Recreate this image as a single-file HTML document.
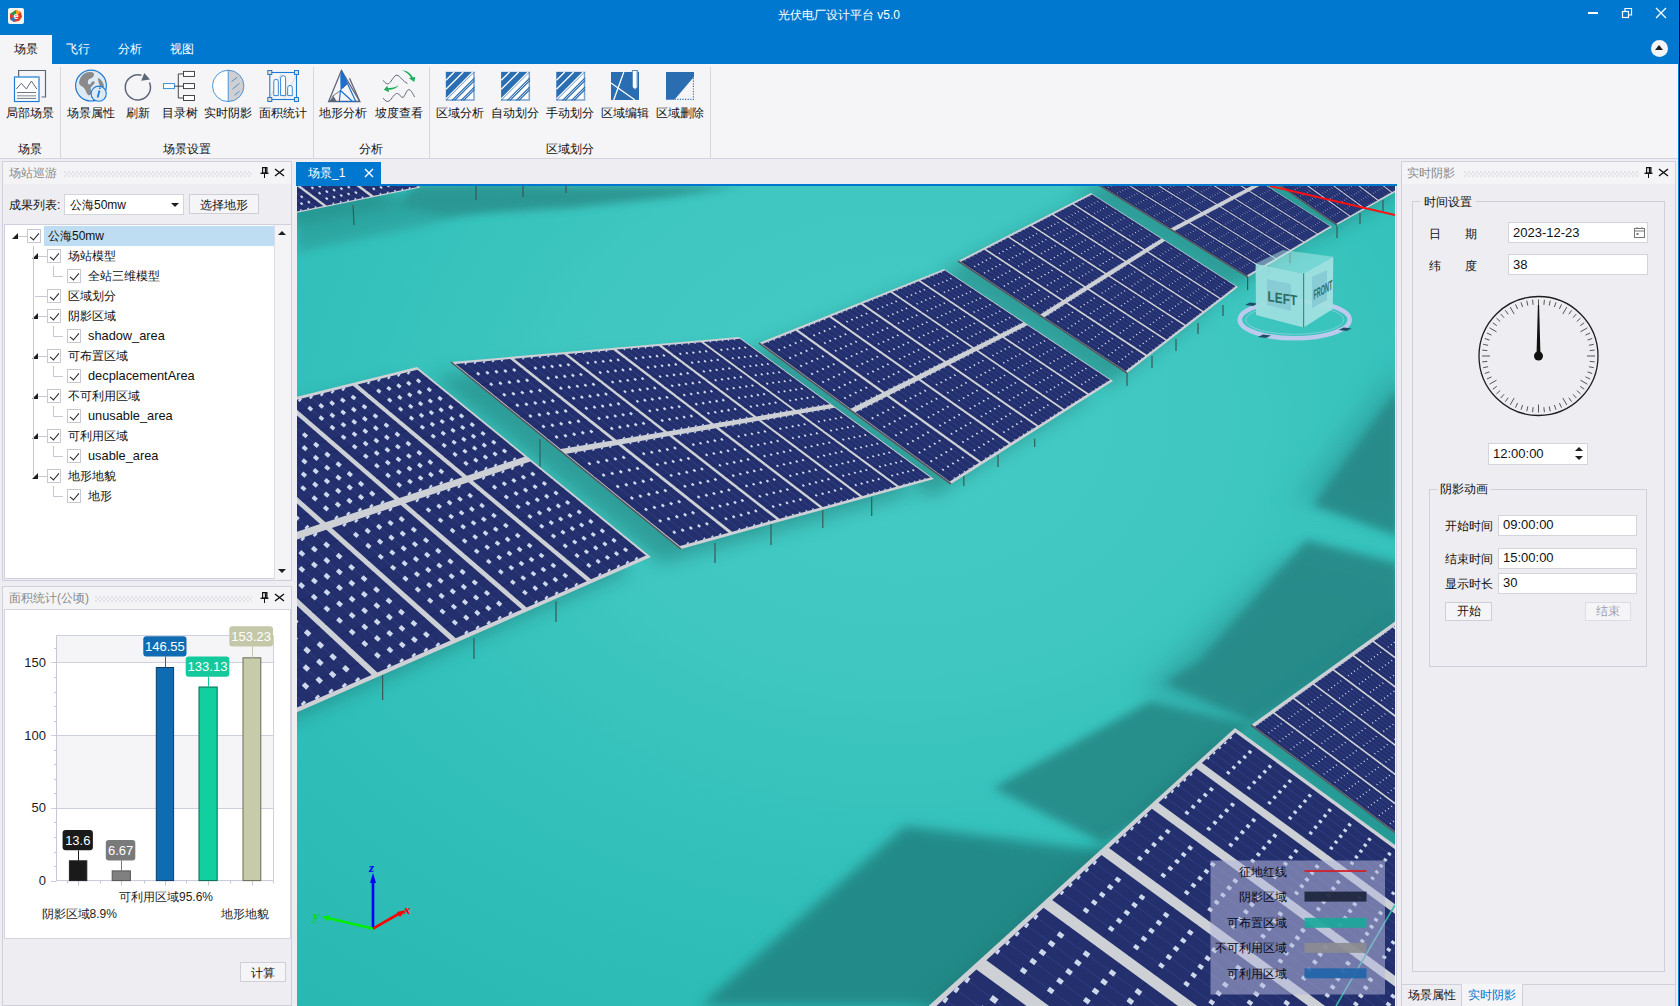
<!DOCTYPE html>
<html><head><meta charset="utf-8">
<style>
*{box-sizing:border-box;margin:0;padding:0}
html,body{width:1680px;height:1006px;overflow:hidden;background:#eeeef2;font-family:"Liberation Sans",sans-serif;font-size:12px;color:#111}
.a{position:absolute}
.t{position:absolute;white-space:nowrap;line-height:14px}
.sep{position:absolute;width:1px;background:#d6d6e0}
.panel{position:absolute;border:1px solid #d0d0dc;background:#ededf2}
.ph{position:absolute;left:0;top:0;right:0;height:22px;background:#f4f4f7}
.dots{position:absolute;height:6px;background-image:radial-gradient(circle at 1px 1px,#dadae2 0.6px,transparent 0.9px),radial-gradient(circle at 1px 1px,#dadae2 0.6px,transparent 0.9px);background-size:4px 4px,4px 4px;background-position:0 0,2px 2px}
.cb{position:absolute;width:14px;height:14px;border:1px solid #c8c8d4;background:#fff}
.cb:after{content:"";position:absolute;left:4px;top:1px;width:4px;height:8px;border:solid #1e1e1e;border-width:0 1.5px 1.5px 0;transform:rotate(40deg)}
.tri{position:absolute;width:0;height:0;border-left:6px solid transparent;border-bottom:6px solid #1e1e1e}
.vl{position:absolute;width:1px;background:#c8c8d4}
.hl{position:absolute;height:1px;background:#c8c8d4}
.inp{position:absolute;background:#fff;border:1px solid #d4d4de}
.btn{position:absolute;background:#f5f5f8;border:1px solid #cfcfda;text-align:center}
.rl{position:absolute;top:42px;font-size:12px;white-space:nowrap;line-height:14px;text-align:center}
.gl{position:absolute;top:78px;font-size:12px;white-space:nowrap;line-height:14px}
</style></head><body>
<!-- title bar -->
<div class="a" style="left:0;top:0;width:1680px;height:64px;background:#0078d0"></div>
<div class="a" style="left:8px;top:8px;width:16px;height:16px;background:#f4f4f0;border-radius:2px"></div>
<svg class="a" style="left:8px;top:8px" width="16" height="16" viewBox="0 0 16 16"><path d="M8 2 L13 4 L14 9 L11 13 L6 14 L2 11 L2 6Z" fill="#e03a2a"/><path d="M2 6 L8 2 L8 8Z" fill="#2a9a3a"/><path d="M8 2 L13 4 L8 8Z" fill="#f5a21b"/><path d="M2 11 L6 14 L8 8Z" fill="#1a7ac8"/><text x="8" y="11" font-size="9" font-family="Liberation Sans" font-weight="bold" fill="#fff" text-anchor="middle">e</text></svg>
<div class="t" style="left:778px;top:8px;color:#fff;font-size:12px">光伏电厂设计平台 v5.0</div>
<div class="a" style="left:1588px;top:12px;width:10px;height:2px;background:#fff"></div>
<svg class="a" style="left:1621px;top:7px" width="12" height="12" viewBox="0 0 12 12"><rect x="1.5" y="4.5" width="6" height="6" fill="none" stroke="#fff" stroke-width="1.2"/><path d="M4 4.5 V1.5 H10.5 V8 H7.5" fill="none" stroke="#fff" stroke-width="1.2"/></svg>
<svg class="a" style="left:1655px;top:7px" width="12" height="12" viewBox="0 0 12 12"><path d="M1 1 L11 11 M11 1 L1 11" stroke="#fff" stroke-width="1.3"/></svg>
<!-- menu tabs -->
<div class="a" style="left:0;top:35px;width:52px;height:29px;background:#f5f5f8"></div>
<div class="t" style="left:14px;top:42px;font-size:12px">场景</div>
<div class="t" style="left:66px;top:42px;color:#fff">飞行</div>
<div class="t" style="left:118px;top:42px;color:#fff">分析</div>
<div class="t" style="left:170px;top:42px;color:#fff">视图</div>
<div class="a" style="left:1651px;top:40px;width:17px;height:17px;border-radius:50%;background:#f5f5f8"></div>
<div class="a" style="left:1655px;top:45px;width:0;height:0;border-left:4.5px solid transparent;border-right:4.5px solid transparent;border-bottom:5px solid #1e1e1e"></div>
<!-- ribbon -->
<div class="a" id="rib" style="left:0;top:64px;width:1678px;height:95px;background:#f5f5f8;border-bottom:1px solid #d4d4de">
  <div class="sep" style="left:60px;top:3px;height:91px"></div>
  <div class="sep" style="left:313px;top:3px;height:91px"></div>
  <div class="sep" style="left:429px;top:3px;height:91px"></div>
  <div class="sep" style="left:710px;top:3px;height:91px"></div>
  <div class="rl" style="left:6px">局部场景</div>
<div class="rl" style="left:67px">场景属性</div>
<div class="rl" style="left:126px">刷新</div>
<div class="rl" style="left:161.5px">目录树</div>
<div class="rl" style="left:204px">实时阴影</div>
<div class="rl" style="left:259px">面积统计</div>
<div class="rl" style="left:319px">地形分析</div>
<div class="rl" style="left:375px">坡度查看</div>
<div class="rl" style="left:436px">区域分析</div>
<div class="rl" style="left:491px">自动划分</div>
<div class="rl" style="left:546px">手动划分</div>
<div class="rl" style="left:601px">区域编辑</div>
<div class="rl" style="left:656px">区域删除</div>
<div class="gl" style="left:18px">场景</div>
<div class="gl" style="left:163px">场景设置</div>
<div class="gl" style="left:359px">分析</div>
<div class="gl" style="left:546px">区域划分</div>
<svg class="a" style="left:0;top:0" width="720" height="60" viewBox="0 64 720 60">
<path d="M18.6 77 V70.5 H45.5 V97 H41.5" fill="none" stroke="#5d6679" stroke-width="1.2"/>
<rect x="14.5" y="77" width="24.5" height="24.5" fill="#fff" stroke="#1f7bd2" stroke-width="1.2"/>
<path d="M14.5 77.3 H39" stroke="#6fb0e6" stroke-width="1.4"/>
<path d="M16.3 89 L21.3 83.3 L26.4 89 L31.4 81 L36.8 89" fill="none" stroke="#5d6679" stroke-width="1"/>
<path d="M17 92.5 H36 M17 98.4 H36" stroke="#5d6679" stroke-width="0.9"/><path d="M17 95.8 H36" stroke="#9aa0ae" stroke-width="1.3"/>
<circle cx="91" cy="85.6" r="15.4" fill="#dde9f3" stroke="#1f7bd2" stroke-width="1.2"/>
<path d="M79 83 C80 76 84 72 90 72 C94 72 95 74 93 77 C91 79 89 78 88 81 C87 84 90 86 91 83 C93 80 96 81 94 84 C92 86 90 87 91 91 C92 94 90 96 88 95 C86 93 86 90 84 88 C82 86 80 86 79 83Z" fill="#8a8a8a"/>
<path d="M98 78 C101 79 104 83 104 87 L101 88 C100 85 98 83 98 78Z" fill="#8a8a8a"/>
<circle cx="98.7" cy="93.7" r="7.6" fill="#dde9f3" stroke="#1f7bd2" stroke-width="1.1"/>
<path d="M99.5 90.5 L97.6 97.5" stroke="#1f7bd2" stroke-width="1.8"/><circle cx="99.8" cy="88.2" r="0.9" fill="#1f7bd2"/>
<path d="M149.5 82.5 A12.6 12.6 0 1 1 141.5 75.3" fill="none" stroke="#5d6679" stroke-width="1.5"/>
<path d="M144.3 73.1 L150 79.6 L141.2 80.8 Z" fill="#5d6679"/>
<rect x="163.5" y="83.6" width="11" height="5" fill="#fff" stroke="#2a86d8" stroke-width="0.9"/>
<rect x="183.5" y="71.4" width="11" height="5" fill="#fff" stroke="#333" stroke-width="0.9"/>
<rect x="183.5" y="83.6" width="11" height="5" fill="#fff" stroke="#333" stroke-width="0.9"/>
<rect x="183.5" y="95.5" width="11" height="5" fill="#fff" stroke="#333" stroke-width="0.9"/>
<path d="M174.5 86.2 H183.5 M178.3 73.9 V98 M178.3 73.9 H183.5 M178.3 98 H183.5" fill="none" stroke="#333" stroke-width="0.9"/>
<path d="M228.2 70.2 A15.7 15.7 0 0 1 228.2 101.6 Z" fill="#d0d0d2"/>
<path d="M228.2 70.2 A15.7 15.7 0 0 0 228.2 101.6 Z" fill="#fff"/>
<circle cx="228.2" cy="85.9" r="15.7" fill="none" stroke="#3a8ad6" stroke-width="0.9"/>
<path d="M228.2 70.2 V101.6" stroke="#3a8ad6" stroke-width="0.9"/>
<path d="M231.5 81.8 L237.5 77 M232.4 89.2 L239.5 83.3 M234.5 95.2 L239.5 91.3" stroke="#3a8ad6" stroke-width="0.9"/>
<path d="M270 98 L281 74 M284 99 L296 76" stroke="#cfcfcf" stroke-width="0.8"/>
<rect x="269.8" y="72.5" width="26.7" height="27" fill="none" stroke="#1f7bd2" stroke-width="1.1"/>
<rect x="267.8" y="70.5" width="4" height="4" fill="#e8dccc" stroke="#1f7bd2" stroke-width="1"/>
<rect x="294.5" y="70.5" width="4" height="4" fill="#e8dccc" stroke="#1f7bd2" stroke-width="1"/>
<rect x="267.8" y="97.5" width="4" height="4" fill="#e8dccc" stroke="#1f7bd2" stroke-width="1"/>
<rect x="294.5" y="97.5" width="4" height="4" fill="#e8dccc" stroke="#1f7bd2" stroke-width="1"/>
<path d="M273.8 95.6 V81.5 A2.2 2.2 0 0 1 278.3 81.5 V95.6 Z" fill="#fff" stroke="#1f7bd2" stroke-width="0.9"/>
<path d="M280.6 95.6 V78.1 A2.5 2.5 0 0 1 285.6 78.1 V95.6 Z" fill="#fff" stroke="#1f7bd2" stroke-width="0.9"/>
<path d="M287.7 95.6 V87.7 A2.3 2.3 0 0 1 292.3 87.7 V95.6 Z" fill="#fff" stroke="#1f7bd2" stroke-width="0.9"/>
<path d="M341.4 70.5 L328.6 101.5 H359.8 Z" fill="none" stroke="#5d6679" stroke-width="1.3"/>
<path d="M349.5 78.2 L359.8 101.5" stroke="#5d6679" stroke-width="1.3"/>
<path d="M341.4 70.5 L347.8 83.5 L340.5 90.5 L340.3 76 Z" fill="#1a6fcc"/>
<path d="M341.4 70.5 L355.8 101.5 M340.5 90 L339.3 101.5 M340.5 90.5 L352.5 101.5 M339 101.5 H356" fill="none" stroke="#1a6fcc" stroke-width="1.2"/>
<path d="M348 83 L343 88 M340.5 90.5 L331.5 97" stroke="#5d6679" stroke-width="0.9"/>
<path d="M329 101.5 L333.5 96 L336.7 101.5 Z" fill="#5d6679"/>
<path d="M383.1 80.3 C385 83 387 84.5 389 83.5 C392 81 394 75 397 75.2 C400 75.5 403 82 407.5 83.3" fill="none" stroke="#5d6679" stroke-width="1"/>
<path d="M383.1 98.1 C385 101 387 102 389 101.2 C392 99 394.5 93 397.5 93.5 C400 94 401 98 403 97.5 C405 96.5 406.5 89.5 409 89.6 C411 89.8 413 94 414.6 97" fill="none" stroke="#5d6679" stroke-width="1"/>
<path d="M402.1 70.3 C407 70.5 411 73.5 413 77.5 L415.3 76.8 L414.2 82 L408.7 78 L411 77.8 C409.5 74.6 406 72 402.1 70.3Z" fill="#1fae5a"/>
<path d="M398.8 85.3 C396.5 88.5 392 90.3 388.5 89.5 L389.2 92.3 L383.8 89.8 L387.3 85.7 L388 88 C392 88.3 396 87 398.8 85.3Z" fill="#1fae5a"/>
<g transform="translate(446.0,72.0)"><rect x="0.5" y="0.5" width="27.5" height="27.5" fill="#fff" stroke="#7aa3d3" stroke-width="1.5"/><path d="M0 0 H28.5 L0 28.5 Z" fill="#2a6db0"/><path d="M0 8.3 L8.3 0" stroke="#fff" stroke-width="1.3"/><path d="M0 17.3 L17.3 0" stroke="#fff" stroke-width="1.3"/><path d="M0 26.9 L26.9 0" stroke="#fff" stroke-width="1.3"/><path d="M6.0 28.5 L28.5 6.0" stroke="#2a6db0" stroke-width="1.1"/><path d="M8.5 28.5 L28.5 8.5" stroke="#2a6db0" stroke-width="1.1"/><path d="M15.0 28.5 L28.5 15.0" stroke="#2a6db0" stroke-width="1.1"/><path d="M17.5 28.5 L28.5 17.5" stroke="#2a6db0" stroke-width="1.1"/></g>
<g transform="translate(501.3,72.0)"><rect x="0.5" y="0.5" width="27.5" height="27.5" fill="#fff" stroke="#7aa3d3" stroke-width="1.5"/><path d="M0 0 H28.5 L0 28.5 Z" fill="#2a6db0"/><path d="M0 8.3 L8.3 0" stroke="#fff" stroke-width="1.3"/><path d="M0 17.3 L17.3 0" stroke="#fff" stroke-width="1.3"/><path d="M0 26.9 L26.9 0" stroke="#fff" stroke-width="1.3"/><path d="M6.0 28.5 L28.5 6.0" stroke="#2a6db0" stroke-width="1.1"/><path d="M8.5 28.5 L28.5 8.5" stroke="#2a6db0" stroke-width="1.1"/><path d="M15.0 28.5 L28.5 15.0" stroke="#2a6db0" stroke-width="1.1"/><path d="M17.5 28.5 L28.5 17.5" stroke="#2a6db0" stroke-width="1.1"/></g>
<g transform="translate(556.5,72.0)"><rect x="0.5" y="0.5" width="27.5" height="27.5" fill="#fff" stroke="#7aa3d3" stroke-width="1.5"/><path d="M0 0 H28.5 L0 28.5 Z" fill="#2a6db0"/><path d="M0 8.3 L8.3 0" stroke="#fff" stroke-width="1.3"/><path d="M0 17.3 L17.3 0" stroke="#fff" stroke-width="1.3"/><path d="M0 26.9 L26.9 0" stroke="#fff" stroke-width="1.3"/><path d="M6.0 28.5 L28.5 6.0" stroke="#2a6db0" stroke-width="1.1"/><path d="M8.5 28.5 L28.5 8.5" stroke="#2a6db0" stroke-width="1.1"/><path d="M15.0 28.5 L28.5 15.0" stroke="#2a6db0" stroke-width="1.1"/><path d="M17.5 28.5 L28.5 17.5" stroke="#2a6db0" stroke-width="1.1"/></g>
<rect x="611" y="72" width="28" height="28" fill="#2a6db0"/>
<path d="M623.8 72 L613.7 100 M611 83 L635 100" stroke="#fff" stroke-width="1.3"/>
<path d="M632.3 70.5 H637.7 V87 L635 89.5 L632.3 87 Z" fill="#fff" stroke="#2a6db0" stroke-width="0.8"/>
<path d="M636.8 71 V86.5" stroke="#8ab0da" stroke-width="0.9"/>
<path d="M666 72 H694 V76.7 L674.4 99.8 H666 Z" fill="#2a6db0"/>
<path d="M693.4 78 V99.4 H675" fill="none" stroke="#2a6db0" stroke-width="1.1" stroke-dasharray="1.2 1.4"/>
</svg>
</div>
<div class="a" style="left:1678px;top:0;width:1px;height:1006px;background:#0080dc"></div><div class="a" style="left:1679px;top:0;width:1px;height:1006px;background:#000"></div>

<!-- left panel 1 -->
<div class="panel" style="left:2px;top:161px;width:290px;height:420px">
  <div class="ph"></div>
  <div class="t" style="left:6px;top:4px;color:#8a8a8a">场站巡游</div>
  <div class="dots" style="left:61px;top:9px;width:188px"></div>
  <svg class="a" style="left:257px;top:5px" width="10" height="12" viewBox="0 0 10 12"><path d="M2.6 0.6 H6.9 V6 H2.6Z" fill="#fff" stroke="#111" stroke-width="1.2"/><path d="M5.6 1 V6" stroke="#111" stroke-width="1.6"/><path d="M0.5 6.3 H8.5" stroke="#111" stroke-width="1.3"/><path d="M4.5 6.5 V11" stroke="#111" stroke-width="1"/></svg>
  <svg class="a" style="left:271px;top:5px" width="11" height="11" viewBox="0 0 11 11"><path d="M1 2 L10 9 M10 2 L1 9" stroke="#111" stroke-width="1.4"/></svg>
  <div class="t" style="left:6px;top:36px">成果列表:</div>
  <div class="inp" style="left:61px;top:32px;width:120px;height:21px"></div>
  <div class="t" style="left:67px;top:36px">公海50mw</div>
  <div class="a" style="left:168px;top:41px;width:0;height:0;border-left:4px solid transparent;border-right:4px solid transparent;border-top:4px solid #1e1e1e"></div>
  <div class="btn" style="left:186px;top:32px;width:70px;height:20px"></div>
  <div class="t" style="left:197px;top:36px">选择地形</div>
  <div class="a" style="left:1px;top:62px;width:287px;height:355px;background:#fff;border:1px solid #d0d0dc;border-right:none"></div>
  <div class="a" style="left:271px;top:63px;width:17px;height:354px;background:#f4f4f7;border-left:1px solid #dcdce4"></div>
  <div class="a" style="left:275px;top:69px;width:0;height:0;border-left:4px solid transparent;border-right:4px solid transparent;border-bottom:4px solid #1e1e1e"></div>
  <div class="a" style="left:275px;top:407px;width:0;height:0;border-left:4px solid transparent;border-right:4px solid transparent;border-top:4px solid #1e1e1e"></div>
  <div class="a" style="left:41px;top:64px;width:230px;height:20px;background:#bedcf2"></div>
<div class="cb" style="left:24px;top:67px"></div>
<div class="t" style="left:45px;top:67px">公海50mw</div>
<div class="tri" style="left:9px;top:71px"></div>
<div class="hl" style="left:15px;top:74px;width:9px"></div>
<div class="cb" style="left:44px;top:87px"></div>
<div class="t" style="left:65px;top:87px">场站模型</div>
<div class="tri" style="left:29px;top:91px"></div>
<div class="hl" style="left:35px;top:94px;width:9px"></div>
<div class="cb" style="left:64px;top:107px"></div>
<div class="t" style="left:85px;top:107px">全站三维模型</div>
<div class="vl" style="left:50px;top:104px;height:11px"></div>
<div class="hl" style="left:50px;top:114px;width:10px"></div>
<div class="cb" style="left:44px;top:127px"></div>
<div class="t" style="left:65px;top:127px">区域划分</div>
<div class="hl" style="left:32px;top:134px;width:12px"></div>
<div class="cb" style="left:44px;top:147px"></div>
<div class="t" style="left:65px;top:147px">阴影区域</div>
<div class="tri" style="left:29px;top:151px"></div>
<div class="hl" style="left:35px;top:154px;width:9px"></div>
<div class="cb" style="left:64px;top:167px"></div>
<div class="t" style="left:85px;top:167px;font-size:12.8px">shadow_area</div>
<div class="vl" style="left:50px;top:164px;height:11px"></div>
<div class="hl" style="left:50px;top:174px;width:10px"></div>
<div class="cb" style="left:44px;top:187px"></div>
<div class="t" style="left:65px;top:187px">可布置区域</div>
<div class="tri" style="left:29px;top:191px"></div>
<div class="hl" style="left:35px;top:194px;width:9px"></div>
<div class="cb" style="left:64px;top:207px"></div>
<div class="t" style="left:85px;top:207px;font-size:12.8px">decplacementArea</div>
<div class="vl" style="left:50px;top:204px;height:11px"></div>
<div class="hl" style="left:50px;top:214px;width:10px"></div>
<div class="cb" style="left:44px;top:227px"></div>
<div class="t" style="left:65px;top:227px">不可利用区域</div>
<div class="tri" style="left:29px;top:231px"></div>
<div class="hl" style="left:35px;top:234px;width:9px"></div>
<div class="cb" style="left:64px;top:247px"></div>
<div class="t" style="left:85px;top:247px;font-size:12.8px">unusable_area</div>
<div class="vl" style="left:50px;top:244px;height:11px"></div>
<div class="hl" style="left:50px;top:254px;width:10px"></div>
<div class="cb" style="left:44px;top:267px"></div>
<div class="t" style="left:65px;top:267px">可利用区域</div>
<div class="tri" style="left:29px;top:271px"></div>
<div class="hl" style="left:35px;top:274px;width:9px"></div>
<div class="cb" style="left:64px;top:287px"></div>
<div class="t" style="left:85px;top:287px;font-size:12.8px">usable_area</div>
<div class="vl" style="left:50px;top:284px;height:11px"></div>
<div class="hl" style="left:50px;top:294px;width:10px"></div>
<div class="cb" style="left:44px;top:307px"></div>
<div class="t" style="left:65px;top:307px">地形地貌</div>
<div class="tri" style="left:29px;top:311px"></div>
<div class="hl" style="left:35px;top:314px;width:9px"></div>
<div class="cb" style="left:64px;top:327px"></div>
<div class="t" style="left:85px;top:327px">地形</div>
<div class="vl" style="left:50px;top:324px;height:11px"></div>
<div class="hl" style="left:50px;top:334px;width:10px"></div>
<div class="vl" style="left:30px;top:84px;height:230px"></div>
</div>

<!-- left panel 2 -->
<div class="panel" style="left:2px;top:586px;width:290px;height:420px">
  <div class="ph"></div>
  <div class="t" style="left:6px;top:4px;color:#8a8a8a">面积统计(公顷)</div>
  <div class="dots" style="left:92px;top:9px;width:157px"></div>
  <svg class="a" style="left:257px;top:5px" width="10" height="12" viewBox="0 0 10 12"><path d="M2.6 0.6 H6.9 V6 H2.6Z" fill="#fff" stroke="#111" stroke-width="1.2"/><path d="M5.6 1 V6" stroke="#111" stroke-width="1.6"/><path d="M0.5 6.3 H8.5" stroke="#111" stroke-width="1.3"/><path d="M4.5 6.5 V11" stroke="#111" stroke-width="1"/></svg>
  <svg class="a" style="left:271px;top:5px" width="11" height="11" viewBox="0 0 11 11"><path d="M1 2 L10 9 M10 2 L1 9" stroke="#111" stroke-width="1.4"/></svg>
  <div class="a" style="left:1px;top:22px;width:287px;height:330px;background:#fff;border:1px solid #d4d4de"></div>
  <div class="btn" style="left:237px;top:375px;width:46px;height:20px"></div>
  <div class="t" style="left:248px;top:379px">计算</div>
</div>

<!-- center doc tab -->
<div class="a" style="left:296px;top:162px;width:85px;height:23px;background:#0078d0"></div>
<div class="t" style="left:308px;top:166px;color:#fff">场景_1</div>
<svg class="a" style="left:364px;top:168px" width="10" height="10" viewBox="0 0 10 10"><path d="M1 1 L9 9 M9 1 L1 9" stroke="#fff" stroke-width="1.4"/></svg>
<div class="a" style="left:296px;top:184px;width:1101px;height:2px;background:#0078d0"></div>
<div class="a" style="left:1396px;top:186px;width:1px;height:820px;background:#cfd0dc"></div>
<div class="a" style="left:1395px;top:186px;width:1px;height:820px;background:#f4f4f8"></div>
<div class="a" style="left:297px;top:186px;width:1098px;height:820px;overflow:hidden">
<svg width="1098" height="820" viewBox="0 0 1098 820" style="display:block">
<defs><filter id="b4" x="-30%" y="-30%" width="160%" height="160%"><feGaussianBlur stdDeviation="4"/></filter><filter id="b5" x="-30%" y="-30%" width="160%" height="160%"><feGaussianBlur stdDeviation="5"/></filter><filter id="b6" x="-30%" y="-30%" width="160%" height="160%"><feGaussianBlur stdDeviation="6"/></filter><filter id="b7" x="-30%" y="-30%" width="160%" height="160%"><feGaussianBlur stdDeviation="7"/></filter><filter id="b8" x="-30%" y="-30%" width="160%" height="160%"><feGaussianBlur stdDeviation="8"/></filter><filter id="b9" x="-30%" y="-30%" width="160%" height="160%"><feGaussianBlur stdDeviation="9"/></filter><filter id="b10" x="-30%" y="-30%" width="160%" height="160%"><feGaussianBlur stdDeviation="10"/></filter><filter id="b12" x="-30%" y="-30%" width="160%" height="160%"><feGaussianBlur stdDeviation="12"/></filter><radialGradient id="gnd" gradientUnits="userSpaceOnUse" cx="603" cy="234" r="800" gradientTransform="translate(603,234) scale(1.3,1) translate(-603,-234)"><stop offset="0" stop-color="#46cbc5"/><stop offset="0.3" stop-color="#40c7c1"/><stop offset="0.55" stop-color="#34c1bb"/><stop offset="0.75" stop-color="#2dbcb6"/><stop offset="1" stop-color="#28b6b0"/></radialGradient></defs>
<style>.fr{fill:#cdd1d6}.nv{fill:#24306e}.gr{stroke:#364992;stroke-width:0.6;fill:none}.gp{stroke:#18225e;stroke-width:0.6;fill:none}.dt path{stroke:#cdd8ea;fill:none}.ed{stroke:#55585e;stroke-width:1.6;fill:none}.lg{stroke:#3d5652;stroke-width:1.2;fill:none}</style>
<rect width="1098" height="820" fill="url(#gnd)"/>
<path d="M118.0,0.0 L443.0,0.0 L373.0,11.0 L273.0,22.0 L148.0,29.0 L103.0,21.0 Z" fill="#2a8f8b" opacity="0.85" filter="url(#b4)"/>
<path d="M0.0,29.0 L124.0,3.0 L173.0,0.0 L263.0,0.0 L133.0,38.0 L0.0,66.0 Z" fill="#2b9995" opacity="0.60" filter="url(#b5)"/>
<path d="M993.0,319.0 L1103.0,174.0 L1103.0,329.0 L1023.0,314.0 Z" fill="#2c9896" opacity="0.55" filter="url(#b12)"/>
<path d="M1016.0,319.0 L1103.0,199.0 L1103.0,351.0 Z" fill="#288887" opacity="0.90" filter="url(#b5)"/>
<path d="M1003.0,370.0 L1103.0,394.0 L1103.0,454.0 L956.0,544.0 L843.0,504.0 L883.0,469.0 L983.0,374.0 Z" fill="#2c9896" opacity="0.60" filter="url(#b12)"/>
<path d="M1009.0,354.0 L1103.0,378.0 L1103.0,439.0 L956.0,536.0 L868.0,497.0 L903.0,474.0 Z" fill="#288887" opacity="0.90" filter="url(#b5)"/>
<path d="M696.0,602.0 L853.0,515.0 L953.0,538.0 L883.0,606.0 L806.0,657.0 Z" fill="#288f8c" opacity="1.00" filter="url(#b5)"/>
<path d="M403.0,820.0 L608.0,640.0 L814.0,666.0 L658.0,820.0 Z" fill="#238b89" opacity="1.00" filter="url(#b6)"/>
<path class="lg" d="M85.6,489.0 L85.6,514.0M176.9,452.0 L177.0,473.0M259.0,415.0 L259.0,436.0M243.0,253.0 L243.0,281.0M418.0,357.0 L418.0,377.0M474.0,338.0 L474.0,359.0M525.8,322.0 L525.8,342.0M574.7,311.0 L574.7,330.0M666.8,289.0 L666.8,300.0M701.0,269.0 L701.0,281.0M737.7,252.7 L737.7,261.0M830.0,187.0 L830.0,200.0M855.0,170.0 L855.0,182.0M879.0,153.0 L879.0,165.0M901.0,137.0 L901.0,148.0M926.0,119.0 L926.0,130.0M950.6,91.0 L950.6,104.0M971.0,79.0 L971.0,90.0M993.0,67.0 L993.0,77.0M1040.0,40.0 L1040.0,52.0M1063.0,27.0 L1063.0,38.0M1086.0,14.0 L1086.0,25.0M179.0,0.0 L179.0,14.0M226.0,0.0 L226.0,11.0M269.0,0.0 L269.0,7.0M56.0,19.0 L57.0,39.0"/>
<path d="M-205.0,-36.0 L-17.0,-74.0 L103.5,15.6 L-85.0,54.0 Z" fill="#1d7572" opacity="0.5" filter="url(#b9)"/>
<path d="M-389.0,316.0 L100.0,195.0 L334.0,385.0 L-124.0,586.0 Z" fill="#1d7572" opacity="0.5" filter="url(#b9)"/>
<path d="M134.0,190.0 L422.0,165.0 L617.0,307.0 L364.0,377.0 Z" fill="#1d7572" opacity="0.5" filter="url(#b9)"/>
<path d="M442.0,171.0 L627.0,97.0 L796.0,209.0 L634.0,312.0 Z" fill="#1d7572" opacity="0.5" filter="url(#b9)"/>
<path d="M641.0,89.0 L774.0,21.0 L921.0,115.0 L810.0,201.0 Z" fill="#1d7572" opacity="0.5" filter="url(#b9)"/>
<path d="M777.0,10.0 L873.0,-35.0 L1015.0,55.0 L931.0,105.0 Z" fill="#1d7572" opacity="0.5" filter="url(#b9)"/>
<path d="M883.0,-42.0 L983.0,-92.0 L1103.0,6.0 L1020.0,53.0 Z" fill="#1d7572" opacity="0.5" filter="url(#b9)"/>
<path d="M918.0,556.0 L488.5,945.7 L892.4,1240.4 L1160.0,733.0 Z" fill="#1d7572" opacity="0.5" filter="url(#b9)"/>
<path d="M934.0,553.0 L1133.0,410.0 L1382.0,596.0 L1183.0,739.0 Z" fill="#1d7572" opacity="0.5" filter="url(#b9)"/>
<path class="fr" d="M-185.0,-50.0 L3.0,-88.0 L123.5,1.6 L-65.0,40.0 Z"/>
<path class="nv" d="M-181.9,-49.3 L-138.1,-58.1 L-81.1,-15.5 L-125.0,-6.6 ZM-134.8,-58.8 L-91.1,-67.6 L-34.0,-25.0 L-77.8,-16.1 ZM-87.8,-68.3 L-44.1,-77.1 L13.0,-34.6 L-30.7,-25.7 ZM-40.8,-77.8 L2.8,-86.6 L60.0,-44.1 L16.3,-35.2 ZM-122.0,-4.3 L-78.1,-13.2 L-20.9,29.6 L-64.8,38.6 ZM-74.8,-13.9 L-31.0,-22.8 L26.3,20.0 L-17.6,29.0 ZM-27.7,-23.4 L16.0,-32.3 L73.4,10.4 L29.6,19.4 ZM19.3,-33.0 L63.0,-41.8 L120.4,0.9 L76.7,9.8 Z"/>
<path class="gp" d="M-174.8,-43.9 L-131.0,-52.8M-167.7,-38.6 L-123.9,-47.5M-160.6,-33.3 L-116.8,-42.1M-153.5,-27.9 L-109.7,-36.8M-146.4,-22.6 L-102.5,-31.5M-139.2,-17.2 L-95.4,-26.1M-132.1,-11.9 L-88.3,-20.8M-127.7,-53.5 L-84.0,-62.3M-120.6,-48.1 L-76.8,-57.0M-113.5,-42.8 L-69.7,-51.7M-106.4,-37.5 L-62.6,-46.3M-99.2,-32.1 L-55.5,-41.0M-92.1,-26.8 L-48.3,-35.7M-85.0,-21.5 L-41.2,-30.3M-80.7,-63.0 L-37.0,-71.8M-73.6,-57.6 L-29.9,-66.5M-66.4,-52.3 L-22.7,-61.2M-59.3,-47.0 L-15.6,-55.9M-52.2,-41.7 L-8.4,-50.5M-45.0,-36.3 L-1.3,-45.2M-37.9,-31.0 L5.8,-39.9M-33.7,-72.5 L9.9,-81.3M-26.6,-67.2 L17.1,-76.0M-19.4,-61.8 L24.2,-70.7M-12.3,-56.5 L31.4,-65.4M-5.2,-51.2 L38.5,-60.0M2.0,-45.9 L45.7,-54.7M9.1,-40.5 L52.8,-49.4M-114.8,1.0 L-71.0,-7.9M-107.7,6.4 L-63.8,-2.5M-100.6,11.8 L-56.7,2.8M-93.4,17.1 L-49.5,8.2M-86.3,22.5 L-42.4,13.5M-79.1,27.8 L-35.2,18.9M-72.0,33.2 L-28.0,24.3M-67.7,-8.5 L-23.9,-17.4M-60.5,-3.2 L-16.7,-12.1M-53.4,2.2 L-9.6,-6.7M-46.2,7.5 L-2.4,-1.4M-39.1,12.9 L4.8,4.0M-31.9,18.2 L11.9,9.3M-24.7,23.6 L19.1,14.7M-20.6,-18.1 L23.2,-27.0M-13.4,-12.8 L30.3,-21.6M-6.3,-7.4 L37.5,-16.3M0.9,-2.1 L44.7,-11.0M8.1,3.3 L51.8,-5.6M15.2,8.6 L59.0,-0.3M22.4,14.0 L66.2,5.1M26.5,-27.6 L70.1,-36.5M33.6,-22.3 L77.3,-31.2M40.8,-17.0 L84.5,-25.9M48.0,-11.6 L91.7,-20.5M55.1,-6.3 L98.8,-15.2M62.3,-0.9 L106.0,-9.8M69.5,4.4 L113.2,-4.5"/>
<path class="gr" d="M-174.6,-50.7 L-117.7,-8.0M-167.3,-52.2 L-110.4,-9.5M-160.0,-53.7 L-103.0,-11.0M-152.7,-55.2 L-95.7,-12.5M-145.4,-56.6 L-88.4,-14.0M-127.5,-60.3 L-70.5,-17.6M-120.2,-61.7 L-63.2,-19.1M-112.9,-63.2 L-55.9,-20.6M-105.7,-64.7 L-48.6,-22.0M-98.4,-66.1 L-41.3,-23.5M-80.5,-69.8 L-23.4,-27.2M-73.2,-71.2 L-16.2,-28.6M-65.9,-72.7 L-8.9,-30.1M-58.7,-74.2 L-1.6,-31.6M-51.4,-75.6 L5.7,-33.1M-33.6,-79.2 L23.6,-36.7M-26.3,-80.7 L30.9,-38.2M-19.0,-82.2 L38.1,-39.7M-11.7,-83.7 L45.4,-41.1M-4.5,-85.1 L52.7,-42.6M-114.7,-5.8 L-57.5,37.1M-107.4,-7.3 L-50.1,35.6M-100.0,-8.8 L-42.8,34.1M-92.7,-10.2 L-35.5,32.6M-85.4,-11.7 L-28.2,31.1M-67.5,-15.4 L-10.3,27.5M-60.2,-16.8 L-3.0,26.0M-52.9,-18.3 L4.4,24.5M-45.6,-19.8 L11.7,23.0M-38.3,-21.3 L19.0,21.5M-20.4,-24.9 L36.9,17.9M-13.1,-26.4 L44.2,16.4M-5.9,-27.9 L51.5,14.9M1.4,-29.4 L58.8,13.4M8.7,-30.8 L66.1,11.9M26.6,-34.5 L84.0,8.3M33.9,-35.9 L91.2,6.8M41.1,-37.4 L98.5,5.3M48.4,-38.9 L105.8,3.8M55.7,-40.4 L113.1,2.3"/>
<g class="dt"><path style="stroke-width:2.09" d="M-174.6,-50.7 L-117.7,-8.0" stroke-dasharray="2.61 6.29" stroke-dashoffset="-7.59"/><path style="stroke-width:2.09" d="M-167.3,-52.2 L-110.4,-9.5" stroke-dasharray="2.61 6.29" stroke-dashoffset="-7.59"/><path style="stroke-width:2.09" d="M-160.0,-53.7 L-103.0,-11.0" stroke-dasharray="2.61 6.29" stroke-dashoffset="-7.59"/><path style="stroke-width:2.09" d="M-152.7,-55.2 L-95.7,-12.5" stroke-dasharray="2.61 6.29" stroke-dashoffset="-7.59"/><path style="stroke-width:2.09" d="M-145.4,-56.6 L-88.4,-14.0" stroke-dasharray="2.61 6.29" stroke-dashoffset="-7.59"/><path style="stroke-width:2.08" d="M-127.5,-60.3 L-70.5,-17.6" stroke-dasharray="2.60 6.30" stroke-dashoffset="-7.60"/><path style="stroke-width:2.08" d="M-120.2,-61.7 L-63.2,-19.1" stroke-dasharray="2.60 6.30" stroke-dashoffset="-7.60"/><path style="stroke-width:2.08" d="M-112.9,-63.2 L-55.9,-20.6" stroke-dasharray="2.60 6.30" stroke-dashoffset="-7.60"/><path style="stroke-width:2.08" d="M-105.7,-64.7 L-48.6,-22.0" stroke-dasharray="2.60 6.30" stroke-dashoffset="-7.60"/><path style="stroke-width:2.08" d="M-98.4,-66.1 L-41.3,-23.5" stroke-dasharray="2.60 6.30" stroke-dashoffset="-7.60"/><path style="stroke-width:2.08" d="M-80.5,-69.8 L-23.4,-27.2" stroke-dasharray="2.60 6.30" stroke-dashoffset="-7.60"/><path style="stroke-width:2.08" d="M-73.2,-71.2 L-16.2,-28.6" stroke-dasharray="2.60 6.30" stroke-dashoffset="-7.60"/><path style="stroke-width:2.08" d="M-65.9,-72.7 L-8.9,-30.1" stroke-dasharray="2.60 6.30" stroke-dashoffset="-7.60"/><path style="stroke-width:2.08" d="M-58.7,-74.2 L-1.6,-31.6" stroke-dasharray="2.60 6.30" stroke-dashoffset="-7.60"/><path style="stroke-width:2.08" d="M-51.4,-75.6 L5.7,-33.1" stroke-dasharray="2.60 6.30" stroke-dashoffset="-7.60"/><path style="stroke-width:2.08" d="M-33.6,-79.2 L23.6,-36.7" stroke-dasharray="2.60 6.31" stroke-dashoffset="-7.61"/><path style="stroke-width:2.08" d="M-26.3,-80.7 L30.9,-38.2" stroke-dasharray="2.60 6.31" stroke-dashoffset="-7.61"/><path style="stroke-width:2.08" d="M-19.0,-82.2 L38.1,-39.7" stroke-dasharray="2.60 6.31" stroke-dashoffset="-7.61"/><path style="stroke-width:2.08" d="M-11.7,-83.7 L45.4,-41.1" stroke-dasharray="2.60 6.31" stroke-dashoffset="-7.61"/><path style="stroke-width:2.08" d="M-4.5,-85.1 L52.7,-42.6" stroke-dasharray="2.60 6.31" stroke-dashoffset="-7.61"/><path style="stroke-width:2.09" d="M-114.7,-5.8 L-57.5,37.1" stroke-dasharray="2.61 6.33" stroke-dashoffset="-7.63"/><path style="stroke-width:2.09" d="M-107.4,-7.3 L-50.1,35.6" stroke-dasharray="2.61 6.33" stroke-dashoffset="-7.63"/><path style="stroke-width:2.09" d="M-100.0,-8.8 L-42.8,34.1" stroke-dasharray="2.61 6.33" stroke-dashoffset="-7.63"/><path style="stroke-width:2.09" d="M-92.7,-10.2 L-35.5,32.6" stroke-dasharray="2.61 6.33" stroke-dashoffset="-7.63"/><path style="stroke-width:2.09" d="M-85.4,-11.7 L-28.2,31.1" stroke-dasharray="2.61 6.33" stroke-dashoffset="-7.63"/><path style="stroke-width:2.09" d="M-67.5,-15.4 L-10.3,27.5" stroke-dasharray="2.61 6.33" stroke-dashoffset="-7.63"/><path style="stroke-width:2.09" d="M-60.2,-16.8 L-3.0,26.0" stroke-dasharray="2.61 6.33" stroke-dashoffset="-7.63"/><path style="stroke-width:2.09" d="M-52.9,-18.3 L4.4,24.5" stroke-dasharray="2.61 6.33" stroke-dashoffset="-7.64"/><path style="stroke-width:2.09" d="M-45.6,-19.8 L11.7,23.0" stroke-dasharray="2.61 6.33" stroke-dashoffset="-7.64"/><path style="stroke-width:2.09" d="M-38.3,-21.3 L19.0,21.5" stroke-dasharray="2.61 6.33" stroke-dashoffset="-7.64"/><path style="stroke-width:2.08" d="M-20.4,-24.9 L36.9,17.9" stroke-dasharray="2.60 6.34" stroke-dashoffset="-7.64"/><path style="stroke-width:2.08" d="M-13.1,-26.4 L44.2,16.4" stroke-dasharray="2.60 6.34" stroke-dashoffset="-7.64"/><path style="stroke-width:2.08" d="M-5.9,-27.9 L51.5,14.9" stroke-dasharray="2.60 6.34" stroke-dashoffset="-7.64"/><path style="stroke-width:2.08" d="M1.4,-29.4 L58.8,13.4" stroke-dasharray="2.60 6.34" stroke-dashoffset="-7.64"/><path style="stroke-width:2.08" d="M8.7,-30.8 L66.1,11.9" stroke-dasharray="2.60 6.34" stroke-dashoffset="-7.64"/><path style="stroke-width:2.08" d="M26.6,-34.5 L84.0,8.3" stroke-dasharray="2.60 6.34" stroke-dashoffset="-7.64"/><path style="stroke-width:2.08" d="M33.9,-35.9 L91.2,6.8" stroke-dasharray="2.60 6.34" stroke-dashoffset="-7.64"/><path style="stroke-width:2.08" d="M41.1,-37.4 L98.5,5.3" stroke-dasharray="2.60 6.34" stroke-dashoffset="-7.64"/><path style="stroke-width:2.08" d="M48.4,-38.9 L105.8,3.8" stroke-dasharray="2.60 6.34" stroke-dashoffset="-7.64"/><path style="stroke-width:2.08" d="M55.7,-40.4 L113.1,2.3" stroke-dasharray="2.60 6.34" stroke-dashoffset="-7.64"/></g>
<path class="fr" d="M-369.0,302.0 L120.0,181.0 L354.0,371.0 L-104.0,572.0 Z"/>
<path class="nv" d="M-362.4,304.0 L-267.4,280.3 L-149.4,394.9 L-242.8,425.6 ZM-260.6,278.6 L-174.9,257.3 L-58.8,365.1 L-142.8,392.7 ZM-168.7,255.7 L-90.8,236.3 L23.1,338.1 L-52.8,363.1 ZM-85.2,234.9 L-14.2,217.2 L97.5,313.6 L28.5,336.3 ZM-9.1,215.9 L56.0,199.7 L165.4,291.2 L102.4,312.0 ZM60.6,198.6 L120.4,183.7 L227.6,270.7 L169.9,289.7 ZM-236.2,432.4 L-142.9,401.2 L-13.1,527.3 L-103.9,566.8 ZM-136.3,399.0 L-52.4,371.0 L74.6,489.0 L-6.6,524.4 ZM-46.5,369.0 L29.3,343.7 L153.5,454.6 L80.4,486.5 ZM34.8,341.9 L103.6,318.9 L224.9,423.5 L158.7,452.3 ZM108.6,317.2 L171.4,296.2 L289.8,395.2 L229.6,421.4 ZM175.9,294.7 L233.4,275.5 L349.0,369.4 L294.1,393.3 Z"/>
<path class="gp" d="M-350.9,315.7 L-256.1,291.3M-339.3,327.4 L-244.7,302.4M-327.6,339.3 L-233.1,313.6M-315.9,351.3 L-221.5,324.9M-304.0,363.4 L-209.7,336.3M-291.9,375.6 L-197.9,347.9M-279.8,387.9 L-185.9,359.5M-267.6,400.4 L-173.9,371.2M-255.2,413.0 L-161.7,383.0M-249.3,289.6 L-163.7,267.6M-237.9,300.7 L-152.4,278.1M-226.4,311.8 L-141.1,288.7M-214.7,323.1 L-129.6,299.3M-203.0,334.4 L-118.1,310.0M-191.2,345.9 L-106.4,320.9M-179.2,357.4 L-94.7,331.8M-167.2,369.1 L-82.8,342.8M-155.0,380.8 L-70.9,353.9M-157.6,266.1 L-79.9,246.1M-146.3,276.5 L-68.8,256.0M-135.0,287.0 L-57.6,266.0M-123.5,297.6 L-46.4,276.1M-112.0,308.3 L-35.0,286.2M-100.4,319.1 L-23.6,296.4M-88.6,329.9 L-12.1,306.7M-76.8,340.9 L-0.4,317.1M-64.9,351.9 L11.3,327.5M-74.3,244.7 L-3.4,226.5M-63.2,254.6 L7.5,235.9M-52.1,264.5 L18.4,245.4M-40.8,274.5 L29.4,254.9M-29.5,284.6 L40.6,264.5M-18.1,294.8 L51.8,274.1M-6.6,305.0 L63.1,283.9M5.0,315.4 L74.5,293.7M16.7,325.8 L85.9,303.6M1.7,225.2 L66.5,208.6M12.5,234.6 L77.2,217.5M23.5,244.0 L88.0,226.5M34.5,253.5 L98.8,235.5M45.6,263.0 L109.7,244.6M56.8,272.7 L120.7,253.8M68.1,282.4 L131.7,263.1M79.4,292.2 L142.9,272.4M90.9,302.0 L154.1,281.8M71.2,207.4 L130.8,192.1M81.9,216.3 L141.3,200.6M92.6,225.2 L151.8,209.1M103.4,234.2 L162.4,217.8M114.3,243.3 L173.1,226.4M125.3,252.5 L183.8,235.2M136.3,261.7 L194.7,244.0M147.4,271.0 L205.6,252.8M158.6,280.3 L216.5,261.8M-223.5,445.2 L-130.5,413.3M-210.7,458.2 L-117.9,425.5M-197.8,471.3 L-105.2,437.8M-184.8,484.6 L-92.4,450.2M-171.6,498.0 L-79.5,462.8M-158.4,511.5 L-66.5,475.4M-144.9,525.1 L-53.3,488.2M-131.4,538.9 L-40.0,501.1M-117.7,552.8 L-26.6,514.1M-123.8,411.0 L-40.2,382.3M-111.3,423.2 L-27.9,393.8M-98.6,435.4 L-15.5,405.3M-85.9,447.8 L-3.0,417.0M-73.0,460.3 L9.7,428.7M-59.9,472.9 L22.4,440.6M-46.8,485.6 L35.3,452.5M-33.5,498.4 L48.3,464.6M-20.1,511.4 L61.4,476.7M-34.3,380.3 L41.3,354.4M-22.0,391.7 L53.3,365.1M-9.6,403.2 L65.5,376.0M3.0,414.8 L77.8,386.9M15.6,426.5 L90.1,398.0M28.3,438.3 L102.6,409.1M41.2,450.2 L115.2,420.4M54.1,462.2 L127.8,431.7M67.2,474.3 L140.6,443.1M46.7,352.5 L115.3,329.0M58.7,363.2 L127.1,339.1M70.9,374.0 L139.0,349.4M83.1,385.0 L151.0,359.7M95.5,395.9 L163.0,370.1M107.9,407.0 L175.2,380.6M120.5,418.2 L187.5,391.2M133.1,429.5 L199.9,401.9M145.9,440.9 L212.3,412.7M120.2,327.3 L182.8,305.8M132.0,337.4 L194.3,315.4M143.9,347.6 L206.0,325.1M155.8,357.9 L217.7,334.9M167.9,368.3 L229.4,344.8M180.0,378.7 L241.3,354.7M192.3,389.3 L253.3,364.7M204.6,399.9 L265.4,374.8M217.1,410.6 L277.5,385.0M187.3,304.2 L244.6,284.6M198.8,313.8 L255.9,293.7M210.4,323.5 L267.2,303.0M222.1,333.3 L278.7,312.2M233.9,343.1 L290.2,321.6M245.7,353.0 L301.8,331.0M257.7,363.0 L313.4,340.5M269.7,373.0 L325.2,350.1M281.9,383.1 L337.1,359.7"/>
<path class="gr" d="M-345.9,299.9 L-226.5,420.3M-329.7,295.9 L-210.6,415.0M-313.8,291.9 L-194.9,409.9M-298.1,288.0 L-179.5,404.8M-282.6,284.1 L-164.3,399.8M-245.8,274.9 L-128.2,387.9M-231.2,271.3 L-113.9,383.2M-216.8,267.7 L-99.8,378.6M-202.6,264.2 L-85.9,374.0M-188.6,260.7 L-72.3,369.5M-155.3,252.4 L-39.7,358.8M-142.0,249.1 L-26.7,354.5M-128.9,245.8 L-14.0,350.3M-116.0,242.6 L-1.5,346.2M-103.4,239.4 L10.9,342.1M-73.0,231.9 L40.4,332.4M-60.9,228.9 L52.2,328.5M-49.0,225.9 L63.8,324.7M-37.2,223.0 L75.2,320.9M-25.6,220.1 L86.4,317.2M2.1,213.1 L113.3,308.4M13.2,210.4 L124.0,304.9M24.1,207.7 L134.6,301.4M34.8,205.0 L145.0,297.9M45.5,202.3 L155.3,294.6M70.9,196.0 L179.9,286.5M81.1,193.5 L189.7,283.2M91.1,191.0 L199.3,280.0M101.0,188.5 L208.9,276.9M110.8,186.1 L218.3,273.8M-219.9,426.9 L-88.1,560.0M-204.0,421.6 L-72.5,553.2M-188.4,416.4 L-57.3,546.5M-173.0,411.2 L-42.3,540.0M-157.8,406.2 L-27.6,533.6M-121.7,394.1 L7.5,518.3M-107.4,389.4 L21.4,512.2M-93.4,384.7 L35.0,506.3M-79.5,380.0 L48.4,500.4M-65.9,375.5 L61.6,494.7M-33.3,364.6 L93.1,481.0M-20.4,360.3 L105.6,475.5M-7.7,356.0 L117.8,470.2M4.8,351.9 L129.9,464.9M17.2,347.7 L141.8,459.7M46.7,337.9 L170.2,447.4M58.4,334.0 L181.5,442.4M69.9,330.1 L192.6,437.6M81.3,326.3 L203.5,432.8M92.5,322.6 L214.3,428.1M119.4,313.6 L240.0,416.9M130.1,310.0 L250.3,412.4M140.6,306.5 L260.4,408.0M151.0,303.0 L270.3,403.7M161.3,299.6 L280.1,399.4M185.8,291.4 L303.6,389.2M195.6,288.1 L312.9,385.1M205.2,284.9 L322.1,381.1M214.8,281.7 L331.2,377.2M224.2,278.6 L340.2,373.3"/>
<g class="dt"><path style="stroke-width:5.25" d="M-345.9,299.9 L-226.5,420.3" stroke-dasharray="5.85 11.10" stroke-dashoffset="-14.03"/><path style="stroke-width:5.25" d="M-329.7,295.9 L-210.6,415.0" stroke-dasharray="5.81 11.04" stroke-dashoffset="-13.94"/><path style="stroke-width:5.25" d="M-313.8,291.9 L-194.9,409.9" stroke-dasharray="5.78 10.97" stroke-dashoffset="-13.86"/><path style="stroke-width:5.25" d="M-298.1,288.0 L-179.5,404.8" stroke-dasharray="5.74 10.90" stroke-dashoffset="-13.77"/><path style="stroke-width:5.25" d="M-282.6,284.1 L-164.3,399.8" stroke-dasharray="5.71 10.84" stroke-dashoffset="-13.69"/><path style="stroke-width:4.74" d="M-245.8,274.9 L-128.2,387.9" stroke-dasharray="5.63 10.68" stroke-dashoffset="-13.49"/><path style="stroke-width:4.74" d="M-231.2,271.3 L-113.9,383.2" stroke-dasharray="5.59 10.62" stroke-dashoffset="-13.41"/><path style="stroke-width:4.74" d="M-216.8,267.7 L-99.8,378.6" stroke-dasharray="5.56 10.56" stroke-dashoffset="-13.34"/><path style="stroke-width:4.74" d="M-202.6,264.2 L-85.9,374.0" stroke-dasharray="5.53 10.49" stroke-dashoffset="-13.26"/><path style="stroke-width:4.74" d="M-188.6,260.7 L-72.3,369.5" stroke-dasharray="5.50 10.43" stroke-dashoffset="-13.18"/><path style="stroke-width:4.31" d="M-155.3,252.4 L-39.7,358.8" stroke-dasharray="5.38 10.32" stroke-dashoffset="-13.02"/><path style="stroke-width:4.31" d="M-142.0,249.1 L-26.7,354.5" stroke-dasharray="5.38 10.24" stroke-dashoffset="-12.93"/><path style="stroke-width:4.31" d="M-128.9,245.8 L-14.0,350.3" stroke-dasharray="5.36 10.17" stroke-dashoffset="-12.85"/><path style="stroke-width:4.31" d="M-116.0,242.6 L-1.5,346.2" stroke-dasharray="5.33 10.12" stroke-dashoffset="-12.78"/><path style="stroke-width:4.31" d="M-103.4,239.4 L10.9,342.1" stroke-dasharray="5.30 10.06" stroke-dashoffset="-12.71"/><path style="stroke-width:3.93" d="M-73.0,231.9 L40.4,332.4" stroke-dasharray="4.91 10.24" stroke-dashoffset="-12.70"/><path style="stroke-width:3.93" d="M-60.9,228.9 L52.2,328.5" stroke-dasharray="4.91 10.16" stroke-dashoffset="-12.62"/><path style="stroke-width:3.93" d="M-49.0,225.9 L63.8,324.7" stroke-dasharray="4.91 10.08" stroke-dashoffset="-12.54"/><path style="stroke-width:3.93" d="M-37.2,223.0 L75.2,320.9" stroke-dasharray="4.91 10.00" stroke-dashoffset="-12.46"/><path style="stroke-width:3.93" d="M-25.6,220.1 L86.4,317.2" stroke-dasharray="4.91 9.92" stroke-dashoffset="-12.38"/><path style="stroke-width:3.60" d="M2.1,213.1 L113.3,308.4" stroke-dasharray="4.50 10.14" stroke-dashoffset="-12.39"/><path style="stroke-width:3.60" d="M13.2,210.4 L124.0,304.9" stroke-dasharray="4.50 10.07" stroke-dashoffset="-12.31"/><path style="stroke-width:3.60" d="M24.1,207.7 L134.6,301.4" stroke-dasharray="4.50 9.99" stroke-dashoffset="-12.24"/><path style="stroke-width:3.60" d="M34.8,205.0 L145.0,297.9" stroke-dasharray="4.50 9.91" stroke-dashoffset="-12.16"/><path style="stroke-width:3.60" d="M45.5,202.3 L155.3,294.6" stroke-dasharray="4.50 9.84" stroke-dashoffset="-12.09"/><path style="stroke-width:3.31" d="M70.9,196.0 L179.9,286.5" stroke-dasharray="4.13 10.03" stroke-dashoffset="-12.09"/><path style="stroke-width:3.31" d="M81.1,193.5 L189.7,283.2" stroke-dasharray="4.13 9.95" stroke-dashoffset="-12.02"/><path style="stroke-width:3.31" d="M91.1,191.0 L199.3,280.0" stroke-dasharray="4.13 9.88" stroke-dashoffset="-11.95"/><path style="stroke-width:3.31" d="M101.0,188.5 L208.9,276.9" stroke-dasharray="4.13 9.81" stroke-dashoffset="-11.88"/><path style="stroke-width:3.31" d="M110.8,186.1 L218.3,273.8" stroke-dasharray="4.13 9.74" stroke-dashoffset="-11.81"/><path style="stroke-width:5.27" d="M-219.9,426.9 L-88.1,560.0" stroke-dasharray="6.46 12.27" stroke-dashoffset="-15.50"/><path style="stroke-width:5.27" d="M-204.0,421.6 L-72.5,553.2" stroke-dasharray="6.42 12.18" stroke-dashoffset="-15.39"/><path style="stroke-width:5.27" d="M-188.4,416.4 L-57.3,546.5" stroke-dasharray="6.37 12.10" stroke-dashoffset="-15.28"/><path style="stroke-width:5.27" d="M-173.0,411.2 L-42.3,540.0" stroke-dasharray="6.33 12.02" stroke-dashoffset="-15.18"/><path style="stroke-width:5.27" d="M-157.8,406.2 L-27.6,533.6" stroke-dasharray="6.29 11.93" stroke-dashoffset="-15.08"/><path style="stroke-width:4.74" d="M-121.7,394.1 L7.5,518.3" stroke-dasharray="5.93 11.99" stroke-dashoffset="-14.96"/><path style="stroke-width:4.74" d="M-107.4,389.4 L21.4,512.2" stroke-dasharray="5.93 11.87" stroke-dashoffset="-14.84"/><path style="stroke-width:4.74" d="M-93.4,384.7 L35.0,506.3" stroke-dasharray="5.93 11.76" stroke-dashoffset="-14.72"/><path style="stroke-width:4.74" d="M-79.5,380.0 L48.4,500.4" stroke-dasharray="5.93 11.64" stroke-dashoffset="-14.60"/><path style="stroke-width:4.74" d="M-65.9,375.5 L61.6,494.7" stroke-dasharray="5.93 11.53" stroke-dashoffset="-14.49"/><path style="stroke-width:4.29" d="M-33.3,364.6 L93.1,481.0" stroke-dasharray="5.36 11.82" stroke-dashoffset="-14.50"/><path style="stroke-width:4.29" d="M-20.4,360.3 L105.6,475.5" stroke-dasharray="5.36 11.71" stroke-dashoffset="-14.39"/><path style="stroke-width:4.29" d="M-7.7,356.0 L117.8,470.2" stroke-dasharray="5.36 11.61" stroke-dashoffset="-14.29"/><path style="stroke-width:4.29" d="M4.8,351.9 L129.9,464.9" stroke-dasharray="5.36 11.50" stroke-dashoffset="-14.18"/><path style="stroke-width:4.29" d="M17.2,347.7 L141.8,459.7" stroke-dasharray="5.36 11.40" stroke-dashoffset="-14.08"/><path style="stroke-width:3.90" d="M46.7,337.9 L170.2,447.4" stroke-dasharray="4.87 11.64" stroke-dashoffset="-14.07"/><path style="stroke-width:3.90" d="M58.4,334.0 L181.5,442.4" stroke-dasharray="4.87 11.54" stroke-dashoffset="-13.97"/><path style="stroke-width:3.90" d="M69.9,330.1 L192.6,437.6" stroke-dasharray="4.87 11.44" stroke-dashoffset="-13.87"/><path style="stroke-width:3.90" d="M81.3,326.3 L203.5,432.8" stroke-dasharray="4.87 11.34" stroke-dashoffset="-13.78"/><path style="stroke-width:3.90" d="M92.5,322.6 L214.3,428.1" stroke-dasharray="4.87 11.25" stroke-dashoffset="-13.68"/><path style="stroke-width:3.55" d="M119.4,313.6 L240.0,416.9" stroke-dasharray="4.44 11.44" stroke-dashoffset="-13.66"/><path style="stroke-width:3.55" d="M130.1,310.0 L250.3,412.4" stroke-dasharray="4.44 11.35" stroke-dashoffset="-13.57"/><path style="stroke-width:3.55" d="M140.6,306.5 L260.4,408.0" stroke-dasharray="4.44 11.26" stroke-dashoffset="-13.48"/><path style="stroke-width:3.55" d="M151.0,303.0 L270.3,403.7" stroke-dasharray="4.44 11.17" stroke-dashoffset="-13.39"/><path style="stroke-width:3.55" d="M161.3,299.6 L280.1,399.4" stroke-dasharray="4.44 11.08" stroke-dashoffset="-13.30"/><path style="stroke-width:3.26" d="M185.8,291.4 L303.6,389.2" stroke-dasharray="4.07 11.24" stroke-dashoffset="-13.27"/><path style="stroke-width:3.26" d="M195.6,288.1 L312.9,385.1" stroke-dasharray="4.07 11.15" stroke-dashoffset="-13.19"/><path style="stroke-width:3.26" d="M205.2,284.9 L322.1,381.1" stroke-dasharray="4.07 11.07" stroke-dashoffset="-13.10"/><path style="stroke-width:3.26" d="M214.8,281.7 L331.2,377.2" stroke-dasharray="4.07 10.98" stroke-dashoffset="-13.02"/><path style="stroke-width:3.26" d="M224.2,278.6 L340.2,373.3" stroke-dasharray="4.07 10.90" stroke-dashoffset="-12.94"/></g>
<path class="fr" d="M154.0,176.0 L442.0,151.0 L637.0,293.0 L384.0,363.0 Z"/>
<path class="nv" d="M158.7,177.9 L213.2,173.1 L315.6,254.4 L263.6,263.1 ZM217.1,172.7 L267.0,168.3 L366.7,245.9 L319.3,253.8 ZM270.6,168.0 L316.3,163.9 L413.5,238.1 L370.1,245.4 ZM319.7,163.6 L361.8,159.9 L456.5,231.0 L416.6,237.6 ZM364.9,159.6 L403.9,156.2 L496.1,224.3 L459.4,230.5 ZM406.7,155.9 L442.9,152.7 L532.8,218.2 L498.8,223.9 ZM269.3,267.8 L321.1,258.9 L431.6,346.7 L382.9,360.0 ZM324.9,258.2 L372.1,250.1 L479.4,333.6 L435.1,345.8 ZM375.5,249.6 L418.8,242.2 L522.9,321.7 L482.6,332.8 ZM421.9,241.6 L461.6,234.8 L562.8,310.8 L525.8,320.9 ZM464.5,234.3 L501.1,228.0 L599.5,300.8 L565.5,310.1 ZM503.8,227.6 L537.7,221.8 L633.4,291.5 L602.0,300.1 Z"/>
<path class="gp" d="M171.4,188.2 L225.6,182.9M184.2,198.6 L238.1,192.9M197.1,209.1 L250.7,202.9M210.2,219.7 L263.5,213.0M223.3,230.4 L276.3,223.2M236.6,241.2 L289.3,233.5M250.0,252.1 L302.4,243.9M229.5,182.5 L279.1,177.7M242.0,192.5 L291.3,187.2M254.6,202.5 L303.6,196.8M267.3,212.5 L316.0,206.4M280.1,222.7 L328.5,216.2M293.1,233.0 L341.1,226.0M306.1,243.4 L353.8,235.9M282.6,177.4 L328.1,172.9M294.8,186.8 L340.0,182.0M307.1,196.4 L352.0,191.2M319.5,206.0 L364.1,200.4M332.0,215.7 L376.3,209.7M344.6,225.5 L388.6,219.1M357.3,235.4 L401.0,228.6M331.4,172.6 L373.4,168.5M343.3,181.7 L385.0,177.2M355.3,190.8 L396.6,186.0M367.3,200.0 L408.4,194.9M379.5,209.3 L420.3,203.8M391.8,218.7 L432.3,212.8M404.1,228.1 L444.3,221.8M376.4,168.2 L415.1,164.5M388.0,176.9 L426.4,172.8M399.6,185.7 L437.8,181.3M411.4,194.5 L449.3,189.7M423.2,203.4 L460.9,198.3M435.2,212.3 L472.6,206.9M447.2,221.4 L484.3,215.6M417.9,164.2 L453.8,160.7M429.2,172.5 L464.9,168.7M440.6,180.9 L476.0,176.8M452.1,189.4 L487.2,185.0M463.6,197.9 L498.5,193.2M475.3,206.5 L509.8,201.5M487.0,215.2 L521.3,209.8M283.1,278.9 L334.5,269.5M296.9,290.2 L348.0,280.2M310.9,301.5 L361.6,291.1M325.0,313.0 L375.4,302.0M339.3,324.6 L389.2,313.0M353.7,336.3 L403.2,324.1M368.2,348.1 L417.4,335.4M338.2,268.8 L385.1,260.3M351.7,279.5 L398.2,270.5M365.3,290.3 L411.5,280.8M379.0,301.2 L424.8,291.2M392.8,312.2 L438.3,301.6M406.8,323.3 L451.8,312.2M420.9,334.5 L465.5,322.9M388.5,259.7 L431.4,251.8M401.6,269.8 L444.2,261.6M414.8,280.1 L457.0,271.4M428.1,290.4 L470.0,281.3M441.5,300.9 L483.0,291.3M455.1,311.4 L496.2,301.3M468.8,322.1 L509.5,311.5M434.5,251.2 L473.9,244.1M447.2,261.0 L486.3,253.4M460.1,270.7 L498.8,262.7M473.0,280.6 L511.4,272.2M486.0,290.6 L524.1,281.7M499.2,300.6 L536.9,291.3M512.5,310.7 L549.8,301.0M476.8,243.5 L513.1,236.9M489.1,252.8 L525.2,245.8M501.6,262.2 L537.3,254.8M514.2,271.6 L549.6,263.8M526.9,281.1 L561.9,273.0M539.6,290.7 L574.4,282.2M552.5,300.3 L586.9,291.4M515.7,236.4 L549.3,230.3M527.8,245.3 L561.1,238.8M539.9,254.3 L572.9,247.4M552.1,263.3 L584.8,256.1M564.4,272.4 L596.8,264.9M576.9,281.5 L608.9,273.7M589.4,290.8 L621.1,282.6"/>
<path class="gr" d="M168.1,177.1 L272.6,261.6M177.4,176.2 L281.4,260.1M186.5,175.4 L290.1,258.7M195.5,174.6 L298.7,257.2M204.4,173.8 L307.2,255.8M225.7,172.0 L327.5,252.5M234.2,171.2 L335.5,251.1M242.5,170.5 L343.5,249.8M250.8,169.7 L351.3,248.5M258.9,169.0 L359.1,247.2M278.4,167.3 L377.6,244.1M286.2,166.6 L384.9,242.9M293.9,165.9 L392.2,241.7M301.5,165.2 L399.4,240.5M309.0,164.6 L406.5,239.3M326.9,163.0 L423.5,236.5M334.1,162.4 L430.2,235.3M341.1,161.7 L436.9,234.2M348.1,161.1 L443.5,233.1M355.0,160.5 L450.0,232.0M371.6,159.0 L465.7,229.4M378.2,158.4 L471.9,228.4M384.7,157.9 L478.1,227.4M391.2,157.3 L484.2,226.3M397.6,156.7 L490.2,225.3M412.9,155.4 L504.6,222.9M419.1,154.8 L510.4,222.0M425.1,154.3 L516.1,221.0M431.1,153.8 L521.7,220.1M437.0,153.2 L527.3,219.2M278.3,266.2 L391.4,357.7M287.1,264.7 L399.7,355.5M295.8,263.2 L407.8,353.2M304.4,261.8 L415.9,351.0M312.8,260.3 L423.8,348.9M333.0,256.8 L442.8,343.7M341.1,255.5 L450.3,341.6M349.0,254.1 L457.7,339.6M356.8,252.8 L465.1,337.6M364.5,251.5 L472.3,335.6M383.0,248.3 L489.5,330.9M390.3,247.0 L496.4,329.0M397.6,245.8 L503.2,327.1M404.7,244.6 L509.8,325.3M411.8,243.4 L516.4,323.5M428.7,240.5 L532.2,319.2M435.5,239.3 L538.5,317.5M442.1,238.2 L544.7,315.8M448.7,237.0 L550.8,314.1M455.2,235.9 L556.9,312.4M470.8,233.2 L571.4,308.5M477.0,232.2 L577.1,306.9M483.2,231.1 L582.8,305.3M489.2,230.1 L588.5,303.8M495.2,229.1 L594.0,302.3M509.6,226.6 L607.4,298.6M515.4,225.6 L612.7,297.2M521.0,224.6 L618.0,295.7M526.7,223.7 L623.2,294.3M532.2,222.7 L628.3,292.9"/>
<g class="dt"><path style="stroke-width:2.55" d="M168.1,177.1 L272.6,261.6" stroke-dasharray="3.19 13.61" stroke-dashoffset="-15.20"/><path style="stroke-width:2.55" d="M177.4,176.2 L281.4,260.1" stroke-dasharray="3.19 13.52" stroke-dashoffset="-15.11"/><path style="stroke-width:2.55" d="M186.5,175.4 L290.1,258.7" stroke-dasharray="3.19 13.42" stroke-dashoffset="-15.02"/><path style="stroke-width:2.55" d="M195.5,174.6 L298.7,257.2" stroke-dasharray="3.19 13.33" stroke-dashoffset="-14.93"/><path style="stroke-width:2.55" d="M204.4,173.8 L307.2,255.8" stroke-dasharray="3.19 13.24" stroke-dashoffset="-14.84"/><path style="stroke-width:2.34" d="M225.7,172.0 L327.5,252.5" stroke-dasharray="2.92 13.30" stroke-dashoffset="-14.76"/><path style="stroke-width:2.34" d="M234.2,171.2 L335.5,251.1" stroke-dasharray="2.92 13.21" stroke-dashoffset="-14.67"/><path style="stroke-width:2.34" d="M242.5,170.5 L343.5,249.8" stroke-dasharray="2.92 13.13" stroke-dashoffset="-14.59"/><path style="stroke-width:2.34" d="M250.8,169.7 L351.3,248.5" stroke-dasharray="2.92 13.04" stroke-dashoffset="-14.50"/><path style="stroke-width:2.34" d="M258.9,169.0 L359.1,247.2" stroke-dasharray="2.92 12.96" stroke-dashoffset="-14.42"/><path style="stroke-width:2.14" d="M278.4,167.3 L377.6,244.1" stroke-dasharray="2.68 13.00" stroke-dashoffset="-14.34"/><path style="stroke-width:2.14" d="M286.2,166.6 L384.9,242.9" stroke-dasharray="2.68 12.91" stroke-dashoffset="-14.25"/><path style="stroke-width:2.14" d="M293.9,165.9 L392.2,241.7" stroke-dasharray="2.68 12.83" stroke-dashoffset="-14.17"/><path style="stroke-width:2.14" d="M301.5,165.2 L399.4,240.5" stroke-dasharray="2.68 12.75" stroke-dashoffset="-14.09"/><path style="stroke-width:2.14" d="M309.0,164.6 L406.5,239.3" stroke-dasharray="2.68 12.68" stroke-dashoffset="-14.02"/><path style="stroke-width:1.98" d="M326.9,163.0 L423.5,236.5" stroke-dasharray="2.47 12.70" stroke-dashoffset="-13.93"/><path style="stroke-width:1.98" d="M334.1,162.4 L430.2,235.3" stroke-dasharray="2.47 12.62" stroke-dashoffset="-13.86"/><path style="stroke-width:1.98" d="M341.1,161.7 L436.9,234.2" stroke-dasharray="2.47 12.54" stroke-dashoffset="-13.78"/><path style="stroke-width:1.98" d="M348.1,161.1 L443.5,233.1" stroke-dasharray="2.47 12.47" stroke-dashoffset="-13.71"/><path style="stroke-width:1.98" d="M355.0,160.5 L450.0,232.0" stroke-dasharray="2.47 12.40" stroke-dashoffset="-13.63"/><path style="stroke-width:1.83" d="M371.6,159.0 L465.7,229.4" stroke-dasharray="2.28 12.40" stroke-dashoffset="-13.55"/><path style="stroke-width:1.83" d="M378.2,158.4 L471.9,228.4" stroke-dasharray="2.28 12.33" stroke-dashoffset="-13.48"/><path style="stroke-width:1.83" d="M384.7,157.9 L478.1,227.4" stroke-dasharray="2.28 12.26" stroke-dashoffset="-13.40"/><path style="stroke-width:1.83" d="M391.2,157.3 L484.2,226.3" stroke-dasharray="2.28 12.19" stroke-dashoffset="-13.33"/><path style="stroke-width:1.83" d="M397.6,156.7 L490.2,225.3" stroke-dasharray="2.28 12.12" stroke-dashoffset="-13.26"/><path style="stroke-width:1.69" d="M412.9,155.4 L504.6,222.9" stroke-dasharray="2.12 12.12" stroke-dashoffset="-13.18"/><path style="stroke-width:1.69" d="M419.1,154.8 L510.4,222.0" stroke-dasharray="2.12 12.05" stroke-dashoffset="-13.11"/><path style="stroke-width:1.69" d="M425.1,154.3 L516.1,221.0" stroke-dasharray="2.12 11.99" stroke-dashoffset="-13.05"/><path style="stroke-width:1.69" d="M431.1,153.8 L521.7,220.1" stroke-dasharray="2.12 11.92" stroke-dashoffset="-12.98"/><path style="stroke-width:1.69" d="M437.0,153.2 L527.3,219.2" stroke-dasharray="2.12 11.86" stroke-dashoffset="-12.91"/><path style="stroke-width:2.45" d="M278.3,266.2 L391.4,357.7" stroke-dasharray="3.07 15.12" stroke-dashoffset="-16.65"/><path style="stroke-width:2.45" d="M287.1,264.7 L399.7,355.5" stroke-dasharray="3.07 15.01" stroke-dashoffset="-16.54"/><path style="stroke-width:2.45" d="M295.8,263.2 L407.8,353.2" stroke-dasharray="3.07 14.90" stroke-dashoffset="-16.43"/><path style="stroke-width:2.45" d="M304.4,261.8 L415.9,351.0" stroke-dasharray="3.07 14.79" stroke-dashoffset="-16.32"/><path style="stroke-width:2.45" d="M312.8,260.3 L423.8,348.9" stroke-dasharray="3.07 14.68" stroke-dashoffset="-16.22"/><path style="stroke-width:2.24" d="M333.0,256.8 L442.8,343.7" stroke-dasharray="2.80 14.70" stroke-dashoffset="-16.09"/><path style="stroke-width:2.24" d="M341.1,255.5 L450.3,341.6" stroke-dasharray="2.80 14.59" stroke-dashoffset="-15.99"/><path style="stroke-width:2.24" d="M349.0,254.1 L457.7,339.6" stroke-dasharray="2.80 14.49" stroke-dashoffset="-15.89"/><path style="stroke-width:2.24" d="M356.8,252.8 L465.1,337.6" stroke-dasharray="2.80 14.39" stroke-dashoffset="-15.79"/><path style="stroke-width:2.24" d="M364.5,251.5 L472.3,335.6" stroke-dasharray="2.80 14.29" stroke-dashoffset="-15.69"/><path style="stroke-width:2.05" d="M383.0,248.3 L489.5,330.9" stroke-dasharray="2.56 14.29" stroke-dashoffset="-15.57"/><path style="stroke-width:2.05" d="M390.3,247.0 L496.4,329.0" stroke-dasharray="2.56 14.20" stroke-dashoffset="-15.48"/><path style="stroke-width:2.05" d="M397.6,245.8 L503.2,327.1" stroke-dasharray="2.56 14.10" stroke-dashoffset="-15.38"/><path style="stroke-width:2.05" d="M404.7,244.6 L509.8,325.3" stroke-dasharray="2.56 14.01" stroke-dashoffset="-15.29"/><path style="stroke-width:2.05" d="M411.8,243.4 L516.4,323.5" stroke-dasharray="2.56 13.92" stroke-dashoffset="-15.20"/><path style="stroke-width:1.88" d="M428.7,240.5 L532.2,319.2" stroke-dasharray="2.35 13.90" stroke-dashoffset="-15.08"/><path style="stroke-width:1.88" d="M435.5,239.3 L538.5,317.5" stroke-dasharray="2.35 13.81" stroke-dashoffset="-14.99"/><path style="stroke-width:1.88" d="M442.1,238.2 L544.7,315.8" stroke-dasharray="2.35 13.73" stroke-dashoffset="-14.90"/><path style="stroke-width:1.88" d="M448.7,237.0 L550.8,314.1" stroke-dasharray="2.35 13.64" stroke-dashoffset="-14.81"/><path style="stroke-width:1.88" d="M455.2,235.9 L556.9,312.4" stroke-dasharray="2.35 13.55" stroke-dashoffset="-14.73"/><path style="stroke-width:1.74" d="M470.8,233.2 L571.4,308.5" stroke-dasharray="2.17 13.53" stroke-dashoffset="-14.61"/><path style="stroke-width:1.74" d="M477.0,232.2 L577.1,306.9" stroke-dasharray="2.17 13.45" stroke-dashoffset="-14.53"/><path style="stroke-width:1.74" d="M483.2,231.1 L582.8,305.3" stroke-dasharray="2.17 13.36" stroke-dashoffset="-14.45"/><path style="stroke-width:1.74" d="M489.2,230.1 L588.5,303.8" stroke-dasharray="2.17 13.28" stroke-dashoffset="-14.37"/><path style="stroke-width:1.74" d="M495.2,229.1 L594.0,302.3" stroke-dasharray="2.17 13.20" stroke-dashoffset="-14.29"/><path style="stroke-width:1.60" d="M509.6,226.6 L607.4,298.6" stroke-dasharray="2.01 13.17" stroke-dashoffset="-14.18"/><path style="stroke-width:1.60" d="M515.4,225.6 L612.7,297.2" stroke-dasharray="2.01 13.09" stroke-dashoffset="-14.10"/><path style="stroke-width:1.60" d="M521.0,224.6 L618.0,295.7" stroke-dasharray="2.01 13.02" stroke-dashoffset="-14.02"/><path style="stroke-width:1.60" d="M526.7,223.7 L623.2,294.3" stroke-dasharray="2.01 12.94" stroke-dashoffset="-13.94"/><path style="stroke-width:1.60" d="M532.2,222.7 L628.3,292.9" stroke-dasharray="2.01 12.87" stroke-dashoffset="-13.87"/></g>
<path class="ed" d="M154.0,176.0 L384.0,363.0"/>
<path class="fr" d="M462.0,157.0 L647.0,83.0 L816.0,195.0 L654.0,298.0 Z"/>
<path class="nv" d="M465.4,158.1 L498.7,144.7 L585.1,207.0 L553.6,222.7 ZM501.1,143.7 L532.3,131.2 L617.0,191.1 L587.4,205.8 ZM534.5,130.3 L563.8,118.5 L646.8,176.1 L619.1,190.0 ZM566.0,117.6 L593.5,106.5 L674.9,162.1 L648.8,175.1 ZM595.5,105.7 L621.6,95.3 L701.3,148.9 L676.8,161.2 ZM623.5,94.5 L648.0,84.6 L726.2,136.5 L703.1,148.0 ZM558.4,226.3 L589.8,210.4 L682.1,276.8 L652.7,295.5 ZM592.1,209.2 L621.6,194.3 L711.8,258.1 L684.3,275.5 ZM623.7,193.2 L651.3,179.3 L739.6,240.6 L713.8,256.8 ZM653.3,178.2 L679.3,165.1 L765.6,224.1 L741.4,239.4 ZM681.2,164.2 L705.6,151.8 L790.0,208.6 L767.3,223.0 ZM707.4,150.9 L730.4,139.3 L813.1,194.1 L791.7,207.6 Z"/>
<path class="gp" d="M476.2,165.9 L509.2,152.3M487.0,173.9 L519.8,159.9M497.8,181.8 L530.5,167.6M508.8,189.9 L541.2,175.4M519.9,198.0 L552.1,183.2M531.0,206.2 L563.0,191.0M542.3,214.4 L574.0,199.0M511.6,151.3 L542.6,138.5M522.2,158.9 L553.0,145.8M532.9,166.6 L563.4,153.2M543.6,174.3 L574.0,160.7M554.4,182.1 L584.6,168.2M565.4,189.9 L595.3,175.8M576.3,197.8 L606.1,183.4M544.8,137.5 L573.9,125.5M555.2,144.9 L584.1,132.6M565.7,152.3 L594.4,139.7M576.2,159.7 L604.7,146.9M586.8,167.2 L615.1,154.1M597.5,174.7 L625.6,161.4M608.3,182.3 L636.2,168.7M576.1,124.6 L603.5,113.3M586.2,131.7 L613.4,120.1M596.5,138.8 L623.5,127.0M606.8,146.0 L633.6,133.9M617.2,153.2 L643.8,140.9M627.7,160.4 L654.1,147.9M638.2,167.8 L664.4,155.0M605.5,112.5 L631.3,101.8M615.4,119.3 L641.1,108.4M625.5,126.2 L650.9,115.0M635.6,133.1 L660.9,121.7M645.8,140.0 L670.9,128.5M656.0,147.0 L680.9,135.2M666.4,154.1 L691.1,142.0M633.2,101.0 L657.6,91.0M643.0,107.6 L667.2,97.3M652.8,114.2 L676.8,103.7M662.7,120.9 L686.6,110.2M672.7,127.6 L696.4,116.7M682.8,134.4 L706.2,123.2M692.9,141.2 L716.2,129.8M569.8,234.7 L601.1,218.4M581.4,243.1 L612.4,226.6M593.0,251.7 L623.8,234.8M604.8,260.3 L635.3,243.1M616.6,269.0 L646.8,251.4M628.5,277.7 L658.5,259.8M640.6,286.6 L670.3,268.3M603.3,217.3 L632.5,202.1M614.6,225.4 L643.6,209.9M626.0,233.6 L654.8,217.8M637.5,241.8 L666.0,225.7M649.0,250.1 L677.3,233.7M660.7,258.5 L688.7,241.8M672.4,267.0 L700.2,249.9M634.7,201.0 L662.1,186.7M645.7,208.8 L672.9,194.2M656.8,216.6 L683.8,201.8M668.1,224.5 L694.8,209.5M679.4,232.5 L705.8,217.1M690.8,240.6 L717.0,224.9M702.2,248.7 L728.2,232.7M664.1,185.7 L689.8,172.3M674.9,193.2 L700.4,179.5M685.8,200.7 L711.1,186.8M696.7,208.4 L721.8,194.2M707.8,216.0 L732.6,201.6M718.9,223.7 L743.5,209.0M730.1,231.5 L754.5,216.5M691.7,171.3 L715.9,158.7M702.2,178.6 L726.3,165.7M712.9,185.8 L736.7,172.7M723.6,193.2 L747.2,179.8M734.4,200.5 L757.8,187.0M745.3,208.0 L768.5,194.1M756.3,215.4 L779.2,201.4M717.7,157.8 L740.5,145.9M728.0,164.8 L750.7,152.7M738.4,171.8 L760.9,159.5M748.9,178.9 L771.2,166.3M759.5,186.0 L781.5,173.2M770.2,193.1 L792.0,180.1M780.9,200.3 L802.5,187.1"/>
<path class="gr" d="M471.1,155.8 L559.0,220.0M476.7,153.5 L564.3,217.4M482.3,151.3 L569.6,214.7M487.8,149.1 L574.8,212.1M493.3,146.9 L580.0,209.5M506.4,141.6 L592.5,203.3M511.7,139.5 L597.5,200.8M516.9,137.4 L602.4,198.3M522.1,135.3 L607.3,195.9M527.2,133.2 L612.2,193.5M539.5,128.3 L623.8,187.6M544.5,126.3 L628.5,185.3M549.4,124.3 L633.2,183.0M554.2,122.3 L637.8,180.7M559.1,120.4 L642.3,178.4M570.7,115.7 L653.3,172.9M575.3,113.9 L657.7,170.7M579.9,112.0 L662.0,168.5M584.5,110.2 L666.3,166.4M589.0,108.4 L670.6,164.2M600.0,104.0 L680.9,159.1M604.4,102.2 L685.1,157.0M608.7,100.4 L689.2,154.9M613.0,98.7 L693.2,152.9M617.3,97.0 L697.3,150.9M627.6,92.8 L707.0,146.0M631.8,91.2 L710.9,144.1M635.9,89.5 L714.8,142.2M640.0,87.9 L718.6,140.2M644.0,86.2 L722.4,138.3M563.8,223.5 L657.7,292.3M569.1,220.8 L662.7,289.1M574.4,218.2 L667.7,286.0M579.6,215.5 L672.5,282.9M584.7,212.9 L677.4,279.9M597.2,206.6 L689.0,272.5M602.1,204.1 L693.7,269.6M607.1,201.6 L698.3,266.7M611.9,199.2 L702.8,263.8M616.8,196.7 L707.3,260.9M628.4,190.8 L718.2,254.0M633.1,188.5 L722.6,251.3M637.7,186.1 L726.9,248.6M642.3,183.8 L731.1,245.9M646.8,181.5 L735.4,243.2M657.7,176.0 L745.6,236.8M662.1,173.8 L749.6,234.2M666.5,171.6 L753.7,231.6M670.8,169.4 L757.7,229.1M675.0,167.3 L761.7,226.6M685.3,162.1 L771.2,220.5M689.4,160.0 L775.1,218.1M693.5,157.9 L778.9,215.7M697.6,155.9 L782.6,213.3M701.6,153.8 L786.3,211.0M711.3,148.9 L795.3,205.3M715.2,147.0 L799.0,203.0M719.0,145.0 L802.5,200.7M722.9,143.1 L806.1,198.5M726.6,141.2 L809.6,196.3"/>
<g class="dt"><path style="stroke-width:1.67" d="M471.1,155.8 L559.0,220.0" stroke-dasharray="2.09 11.52" stroke-dashoffset="-12.56"/><path style="stroke-width:1.67" d="M476.7,153.5 L564.3,217.4" stroke-dasharray="2.09 11.46" stroke-dashoffset="-12.50"/><path style="stroke-width:1.67" d="M482.3,151.3 L569.6,214.7" stroke-dasharray="2.09 11.40" stroke-dashoffset="-12.45"/><path style="stroke-width:1.67" d="M487.8,149.1 L574.8,212.1" stroke-dasharray="2.09 11.34" stroke-dashoffset="-12.39"/><path style="stroke-width:1.67" d="M493.3,146.9 L580.0,209.5" stroke-dasharray="2.09 11.29" stroke-dashoffset="-12.33"/><path style="stroke-width:1.57" d="M506.4,141.6 L592.5,203.3" stroke-dasharray="1.96 11.28" stroke-dashoffset="-12.26"/><path style="stroke-width:1.57" d="M511.7,139.5 L597.5,200.8" stroke-dasharray="1.96 11.22" stroke-dashoffset="-12.20"/><path style="stroke-width:1.57" d="M516.9,137.4 L602.4,198.3" stroke-dasharray="1.96 11.17" stroke-dashoffset="-12.15"/><path style="stroke-width:1.57" d="M522.1,135.3 L607.3,195.9" stroke-dasharray="1.96 11.11" stroke-dashoffset="-12.09"/><path style="stroke-width:1.57" d="M527.2,133.2 L612.2,193.5" stroke-dasharray="1.96 11.06" stroke-dashoffset="-12.04"/><path style="stroke-width:1.47" d="M539.5,128.3 L623.8,187.6" stroke-dasharray="1.84 11.05" stroke-dashoffset="-11.97"/><path style="stroke-width:1.47" d="M544.5,126.3 L628.5,185.3" stroke-dasharray="1.84 10.99" stroke-dashoffset="-11.91"/><path style="stroke-width:1.47" d="M549.4,124.3 L633.2,183.0" stroke-dasharray="1.84 10.94" stroke-dashoffset="-11.86"/><path style="stroke-width:1.47" d="M554.2,122.3 L637.8,180.7" stroke-dasharray="1.84 10.89" stroke-dashoffset="-11.81"/><path style="stroke-width:1.47" d="M559.1,120.4 L642.3,178.4" stroke-dasharray="1.84 10.84" stroke-dashoffset="-11.76"/><path style="stroke-width:1.39" d="M570.7,115.7 L653.3,172.9" stroke-dasharray="1.73 10.82" stroke-dashoffset="-11.69"/><path style="stroke-width:1.39" d="M575.3,113.9 L657.7,170.7" stroke-dasharray="1.73 10.77" stroke-dashoffset="-11.64"/><path style="stroke-width:1.39" d="M579.9,112.0 L662.0,168.5" stroke-dasharray="1.73 10.72" stroke-dashoffset="-11.59"/><path style="stroke-width:1.39" d="M584.5,110.2 L666.3,166.4" stroke-dasharray="1.73 10.68" stroke-dashoffset="-11.54"/><path style="stroke-width:1.39" d="M589.0,108.4 L670.6,164.2" stroke-dasharray="1.73 10.63" stroke-dashoffset="-11.49"/><path style="stroke-width:1.31" d="M600.0,104.0 L680.9,159.1" stroke-dasharray="1.63 10.61" stroke-dashoffset="-11.43"/><path style="stroke-width:1.31" d="M604.4,102.2 L685.1,157.0" stroke-dasharray="1.63 10.56" stroke-dashoffset="-11.38"/><path style="stroke-width:1.31" d="M608.7,100.4 L689.2,154.9" stroke-dasharray="1.63 10.51" stroke-dashoffset="-11.33"/><path style="stroke-width:1.31" d="M613.0,98.7 L693.2,152.9" stroke-dasharray="1.63 10.47" stroke-dashoffset="-11.28"/><path style="stroke-width:1.31" d="M617.3,97.0 L697.3,150.9" stroke-dasharray="1.63 10.42" stroke-dashoffset="-11.24"/><path style="stroke-width:1.24" d="M627.6,92.8 L707.0,146.0" stroke-dasharray="1.54 10.40" stroke-dashoffset="-11.17"/><path style="stroke-width:1.24" d="M631.8,91.2 L710.9,144.1" stroke-dasharray="1.54 10.35" stroke-dashoffset="-11.13"/><path style="stroke-width:1.24" d="M635.9,89.5 L714.8,142.2" stroke-dasharray="1.54 10.31" stroke-dashoffset="-11.08"/><path style="stroke-width:1.24" d="M640.0,87.9 L718.6,140.2" stroke-dasharray="1.54 10.27" stroke-dashoffset="-11.04"/><path style="stroke-width:1.24" d="M644.0,86.2 L722.4,138.3" stroke-dasharray="1.54 10.22" stroke-dashoffset="-10.99"/><path style="stroke-width:1.64" d="M563.8,223.5 L657.7,292.3" stroke-dasharray="2.06 12.50" stroke-dashoffset="-13.53"/><path style="stroke-width:1.64" d="M569.1,220.8 L662.7,289.1" stroke-dasharray="2.06 12.43" stroke-dashoffset="-13.46"/><path style="stroke-width:1.64" d="M574.4,218.2 L667.7,286.0" stroke-dasharray="2.06 12.36" stroke-dashoffset="-13.39"/><path style="stroke-width:1.64" d="M579.6,215.5 L672.5,282.9" stroke-dasharray="2.06 12.30" stroke-dashoffset="-13.32"/><path style="stroke-width:1.64" d="M584.7,212.9 L677.4,279.9" stroke-dasharray="2.06 12.23" stroke-dashoffset="-13.26"/><path style="stroke-width:1.54" d="M597.2,206.6 L689.0,272.5" stroke-dasharray="1.92 12.20" stroke-dashoffset="-13.17"/><path style="stroke-width:1.54" d="M602.1,204.1 L693.7,269.6" stroke-dasharray="1.92 12.14" stroke-dashoffset="-13.10"/><path style="stroke-width:1.54" d="M607.1,201.6 L698.3,266.7" stroke-dasharray="1.92 12.08" stroke-dashoffset="-13.04"/><path style="stroke-width:1.54" d="M611.9,199.2 L702.8,263.8" stroke-dasharray="1.92 12.01" stroke-dashoffset="-12.98"/><path style="stroke-width:1.54" d="M616.8,196.7 L707.3,260.9" stroke-dasharray="1.92 11.95" stroke-dashoffset="-12.91"/><path style="stroke-width:1.44" d="M628.4,190.8 L718.2,254.0" stroke-dasharray="1.80 11.92" stroke-dashoffset="-12.82"/><path style="stroke-width:1.44" d="M633.1,188.5 L722.6,251.3" stroke-dasharray="1.80 11.86" stroke-dashoffset="-12.76"/><path style="stroke-width:1.44" d="M637.7,186.1 L726.9,248.6" stroke-dasharray="1.80 11.80" stroke-dashoffset="-12.70"/><path style="stroke-width:1.44" d="M642.3,183.8 L731.1,245.9" stroke-dasharray="1.80 11.74" stroke-dashoffset="-12.64"/><path style="stroke-width:1.44" d="M646.8,181.5 L735.4,243.2" stroke-dasharray="1.80 11.68" stroke-dashoffset="-12.59"/><path style="stroke-width:1.36" d="M657.7,176.0 L745.6,236.8" stroke-dasharray="1.70 11.65" stroke-dashoffset="-12.50"/><path style="stroke-width:1.36" d="M662.1,173.8 L749.6,234.2" stroke-dasharray="1.70 11.59" stroke-dashoffset="-12.44"/><path style="stroke-width:1.36" d="M666.5,171.6 L753.7,231.6" stroke-dasharray="1.70 11.54" stroke-dashoffset="-12.39"/><path style="stroke-width:1.36" d="M670.8,169.4 L757.7,229.1" stroke-dasharray="1.70 11.48" stroke-dashoffset="-12.33"/><path style="stroke-width:1.36" d="M675.0,167.3 L761.7,226.6" stroke-dasharray="1.70 11.43" stroke-dashoffset="-12.27"/><path style="stroke-width:1.28" d="M685.3,162.1 L771.2,220.5" stroke-dasharray="1.60 11.39" stroke-dashoffset="-12.19"/><path style="stroke-width:1.28" d="M689.4,160.0 L775.1,218.1" stroke-dasharray="1.60 11.34" stroke-dashoffset="-12.14"/><path style="stroke-width:1.28" d="M693.5,157.9 L778.9,215.7" stroke-dasharray="1.60 11.29" stroke-dashoffset="-12.08"/><path style="stroke-width:1.28" d="M697.6,155.9 L782.6,213.3" stroke-dasharray="1.60 11.23" stroke-dashoffset="-12.03"/><path style="stroke-width:1.28" d="M701.6,153.8 L786.3,211.0" stroke-dasharray="1.60 11.18" stroke-dashoffset="-11.98"/><path style="stroke-width:1.20" d="M711.3,148.9 L795.3,205.3" stroke-dasharray="1.51 11.14" stroke-dashoffset="-11.90"/><path style="stroke-width:1.20" d="M715.2,147.0 L799.0,203.0" stroke-dasharray="1.51 11.09" stroke-dashoffset="-11.85"/><path style="stroke-width:1.20" d="M719.0,145.0 L802.5,200.7" stroke-dasharray="1.51 11.04" stroke-dashoffset="-11.80"/><path style="stroke-width:1.20" d="M722.9,143.1 L806.1,198.5" stroke-dasharray="1.51 10.99" stroke-dashoffset="-11.75"/><path style="stroke-width:1.20" d="M726.6,141.2 L809.6,196.3" stroke-dasharray="1.51 10.94" stroke-dashoffset="-11.70"/></g>
<path class="ed" d="M462.0,157.0 L654.0,298.0"/>
<path class="fr" d="M661.0,75.0 L794.0,7.0 L941.0,101.0 L830.0,187.0 Z"/>
<path class="nv" d="M663.9,75.8 L687.3,63.8 L764.8,114.9 L743.2,128.4 ZM689.0,62.9 L711.1,51.6 L786.8,101.1 L766.4,113.9 ZM712.7,50.7 L733.7,40.0 L807.7,88.0 L788.3,100.2 ZM735.3,39.2 L755.2,28.9 L827.5,75.7 L809.1,87.1 ZM756.7,28.2 L775.6,18.4 L846.3,63.9 L828.9,74.8 ZM777.0,17.7 L795.1,8.4 L864.3,52.7 L847.6,63.1 ZM747.4,131.2 L768.9,117.6 L848.3,169.9 L828.7,185.0 ZM770.5,116.6 L790.8,103.7 L868.4,154.4 L849.8,168.8 ZM792.3,102.8 L811.6,90.6 L887.3,139.8 L869.7,153.4 ZM813.0,89.7 L831.4,78.1 L905.3,126.0 L888.6,138.8 ZM832.7,77.3 L850.1,66.3 L922.4,112.8 L906.5,125.0 ZM851.4,65.5 L867.9,55.1 L938.6,100.3 L923.6,111.9 Z"/>
<path class="gp" d="M673.7,82.3 L696.9,70.1M683.5,88.9 L706.5,76.5M693.4,95.4 L716.1,82.8M703.3,101.9 L725.8,89.2M713.2,108.5 L735.5,95.6M723.2,115.1 L745.2,102.0M733.1,121.7 L755.0,108.4M698.6,69.3 L720.5,57.7M708.2,75.6 L729.9,63.8M717.8,81.9 L739.3,70.0M727.4,88.3 L748.8,76.2M737.1,94.6 L758.2,82.4M746.8,101.0 L767.7,88.6M756.6,107.4 L777.3,94.8M722.1,56.9 L742.9,45.9M731.5,63.0 L752.1,51.9M740.9,69.1 L761.3,57.9M750.3,75.3 L770.5,63.9M759.8,81.5 L779.8,69.9M769.3,87.7 L789.1,75.9M778.8,93.9 L798.4,82.0M744.4,45.1 L764.2,34.7M753.6,51.1 L773.1,40.5M762.8,57.0 L782.1,46.3M772.0,63.0 L791.2,52.2M781.2,69.0 L800.2,58.0M790.5,75.1 L809.3,63.9M799.8,81.1 L818.4,69.8M765.6,33.9 L784.4,24.1M774.6,39.7 L793.2,29.7M783.6,45.5 L802.0,35.4M792.6,51.4 L810.8,41.0M801.6,57.2 L819.7,46.7M810.7,63.1 L828.5,52.4M819.8,68.9 L837.4,58.2M785.8,23.3 L803.6,13.9M794.5,29.0 L812.2,19.4M803.3,34.6 L820.8,24.9M812.1,40.3 L829.5,30.5M821.0,46.0 L838.1,36.0M829.8,51.7 L846.8,41.5M838.7,57.4 L855.5,47.1M757.4,137.8 L778.7,124.0M767.5,144.5 L788.6,130.5M777.6,151.2 L798.5,137.0M787.8,157.9 L808.4,143.6M798.0,164.7 L818.3,150.1M808.2,171.4 L828.3,156.7M818.4,178.2 L838.3,163.3M780.3,123.0 L800.4,110.0M790.1,129.5 L810.1,116.3M800.0,136.0 L819.7,122.6M809.9,142.5 L829.4,128.9M819.8,149.1 L839.1,135.3M829.8,155.6 L848.8,141.7M839.8,162.2 L858.6,148.0M801.9,109.0 L821.0,96.7M811.5,115.3 L830.4,102.8M821.2,121.6 L839.8,108.9M830.8,127.9 L849.3,115.1M840.5,134.3 L858.8,121.2M850.2,140.6 L868.3,127.4M860.0,147.0 L877.8,133.6M822.4,95.8 L840.5,84.1M831.8,101.9 L849.7,90.0M841.2,108.0 L858.9,95.9M850.6,114.1 L868.1,101.9M860.1,120.3 L877.4,107.9M869.6,126.4 L886.7,113.9M879.1,132.6 L896.0,119.9M841.8,83.2 L859.1,72.1M851.0,89.1 L868.0,77.8M860.2,95.1 L877.0,83.6M869.4,101.0 L886.1,89.4M878.7,107.0 L895.1,95.2M887.9,113.0 L904.2,101.1M897.2,119.0 L913.3,106.9M860.3,71.2 L876.7,60.7M869.3,77.0 L885.5,66.3M878.3,82.8 L894.3,71.9M887.3,88.6 L903.1,77.5M896.3,94.4 L912.0,83.2M905.4,100.2 L920.8,88.9M914.5,106.0 L929.7,94.6"/>
<path class="gr" d="M667.9,73.8 L746.8,126.1M671.8,71.8 L750.5,123.8M675.7,69.8 L754.1,121.5M679.6,67.8 L757.7,119.3M683.5,65.8 L761.2,117.1M692.8,61.0 L769.8,111.7M696.5,59.1 L773.3,109.5M700.2,57.2 L776.7,107.4M703.9,55.3 L780.1,105.3M707.5,53.4 L783.5,103.2M716.3,48.9 L791.6,98.1M719.9,47.1 L794.9,96.0M723.4,45.3 L798.1,94.0M726.9,43.5 L801.3,92.0M730.3,41.7 L804.5,90.0M738.7,37.4 L812.2,85.2M742.0,35.7 L815.3,83.3M745.4,34.0 L818.4,81.3M748.7,32.3 L821.5,79.4M752.0,30.6 L824.5,77.5M759.9,26.5 L831.8,73.0M763.1,24.9 L834.8,71.1M766.3,23.2 L837.7,69.3M769.4,21.6 L840.6,67.5M772.5,20.0 L843.5,65.7M780.1,16.1 L850.5,61.3M783.1,14.6 L853.3,59.6M786.1,13.0 L856.0,57.8M789.1,11.5 L858.8,56.1M792.1,10.0 L861.5,54.4M751.0,128.8 L832.0,182.5M754.7,126.6 L835.4,179.9M758.3,124.3 L838.6,177.4M761.8,122.0 L841.9,174.8M765.4,119.8 L845.1,172.4M773.9,114.4 L852.9,166.3M777.4,112.2 L856.1,163.9M780.8,110.1 L859.2,161.5M784.2,107.9 L862.3,159.1M787.5,105.8 L865.3,156.8M795.6,100.7 L872.7,151.1M798.9,98.7 L875.7,148.8M802.1,96.6 L878.6,146.5M805.3,94.6 L881.6,144.3M808.5,92.6 L884.5,142.0M816.2,87.7 L891.5,136.6M819.2,85.8 L894.3,134.5M822.3,83.9 L897.1,132.3M825.4,81.9 L899.9,130.2M828.4,80.0 L902.6,128.1M835.7,75.4 L909.2,122.9M838.6,73.6 L911.9,120.9M841.5,71.7 L914.6,118.8M844.4,69.9 L917.2,116.8M847.3,68.1 L919.8,114.8M854.2,63.7 L926.1,109.9M857.0,62.0 L928.7,108.0M859.8,60.2 L931.2,106.0M862.5,58.5 L933.7,104.1M865.2,56.8 L936.2,102.2"/>
<g class="dt"><path style="stroke-width:1.23" d="M667.9,73.8 L746.8,126.1" stroke-dasharray="1.53 10.30" stroke-dashoffset="-11.07"/><path style="stroke-width:1.23" d="M671.8,71.8 L750.5,123.8" stroke-dasharray="1.53 10.26" stroke-dashoffset="-11.02"/><path style="stroke-width:1.23" d="M675.7,69.8 L754.1,121.5" stroke-dasharray="1.53 10.21" stroke-dashoffset="-10.97"/><path style="stroke-width:1.23" d="M679.6,67.8 L757.7,119.3" stroke-dasharray="1.53 10.16" stroke-dashoffset="-10.93"/><path style="stroke-width:1.23" d="M683.5,65.8 L761.2,117.1" stroke-dasharray="1.53 10.11" stroke-dashoffset="-10.88"/><path style="stroke-width:1.16" d="M692.8,61.0 L769.8,111.7" stroke-dasharray="1.45 10.08" stroke-dashoffset="-10.81"/><path style="stroke-width:1.16" d="M696.5,59.1 L773.3,109.5" stroke-dasharray="1.45 10.03" stroke-dashoffset="-10.76"/><path style="stroke-width:1.16" d="M700.2,57.2 L776.7,107.4" stroke-dasharray="1.45 9.99" stroke-dashoffset="-10.71"/><path style="stroke-width:1.16" d="M703.9,55.3 L780.1,105.3" stroke-dasharray="1.45 9.94" stroke-dashoffset="-10.67"/><path style="stroke-width:1.16" d="M707.5,53.4 L783.5,103.2" stroke-dasharray="1.45 9.90" stroke-dashoffset="-10.62"/><path style="stroke-width:1.10" d="M716.3,48.9 L791.6,98.1" stroke-dasharray="1.38 9.86" stroke-dashoffset="-10.55"/><path style="stroke-width:1.10" d="M719.9,47.1 L794.9,96.0" stroke-dasharray="1.38 9.82" stroke-dashoffset="-10.51"/><path style="stroke-width:1.10" d="M723.4,45.3 L798.1,94.0" stroke-dasharray="1.38 9.78" stroke-dashoffset="-10.47"/><path style="stroke-width:1.10" d="M726.9,43.5 L801.3,92.0" stroke-dasharray="1.38 9.73" stroke-dashoffset="-10.42"/><path style="stroke-width:1.10" d="M730.3,41.7 L804.5,90.0" stroke-dasharray="1.38 9.69" stroke-dashoffset="-10.38"/><path style="stroke-width:1.05" d="M738.7,37.4 L812.2,85.2" stroke-dasharray="1.31 9.66" stroke-dashoffset="-10.31"/><path style="stroke-width:1.05" d="M742.0,35.7 L815.3,83.3" stroke-dasharray="1.31 9.62" stroke-dashoffset="-10.27"/><path style="stroke-width:1.05" d="M745.4,34.0 L818.4,81.3" stroke-dasharray="1.31 9.58" stroke-dashoffset="-10.23"/><path style="stroke-width:1.05" d="M748.7,32.3 L821.5,79.4" stroke-dasharray="1.31 9.53" stroke-dashoffset="-10.19"/><path style="stroke-width:1.05" d="M752.0,30.6 L824.5,77.5" stroke-dasharray="1.31 9.49" stroke-dashoffset="-10.15"/><path style="stroke-width:0.99" d="M759.9,26.5 L831.8,73.0" stroke-dasharray="1.24 9.46" stroke-dashoffset="-10.08"/><path style="stroke-width:0.99" d="M763.1,24.9 L834.8,71.1" stroke-dasharray="1.24 9.42" stroke-dashoffset="-10.04"/><path style="stroke-width:0.99" d="M766.3,23.2 L837.7,69.3" stroke-dasharray="1.24 9.38" stroke-dashoffset="-10.00"/><path style="stroke-width:0.99" d="M769.4,21.6 L840.6,67.5" stroke-dasharray="1.24 9.34" stroke-dashoffset="-9.96"/><path style="stroke-width:0.99" d="M772.5,20.0 L843.5,65.7" stroke-dasharray="1.24 9.30" stroke-dashoffset="-9.93"/><path style="stroke-width:0.95" d="M780.1,16.1 L850.5,61.3" stroke-dasharray="1.18 9.27" stroke-dashoffset="-9.86"/><path style="stroke-width:0.95" d="M783.1,14.6 L853.3,59.6" stroke-dasharray="1.18 9.23" stroke-dashoffset="-9.82"/><path style="stroke-width:0.95" d="M786.1,13.0 L856.0,57.8" stroke-dasharray="1.18 9.19" stroke-dashoffset="-9.79"/><path style="stroke-width:0.95" d="M789.1,11.5 L858.8,56.1" stroke-dasharray="1.18 9.16" stroke-dashoffset="-9.75"/><path style="stroke-width:0.95" d="M792.1,10.0 L861.5,54.4" stroke-dasharray="1.18 9.12" stroke-dashoffset="-9.71"/><path style="stroke-width:1.19" d="M751.0,128.8 L832.0,182.5" stroke-dasharray="1.48 10.66" stroke-dashoffset="-11.40"/><path style="stroke-width:1.19" d="M754.7,126.6 L835.4,179.9" stroke-dasharray="1.48 10.60" stroke-dashoffset="-11.35"/><path style="stroke-width:1.19" d="M758.3,124.3 L838.6,177.4" stroke-dasharray="1.48 10.55" stroke-dashoffset="-11.30"/><path style="stroke-width:1.19" d="M761.8,122.0 L841.9,174.8" stroke-dasharray="1.48 10.50" stroke-dashoffset="-11.25"/><path style="stroke-width:1.19" d="M765.4,119.8 L845.1,172.4" stroke-dasharray="1.48 10.45" stroke-dashoffset="-11.20"/><path style="stroke-width:1.12" d="M773.9,114.4 L852.9,166.3" stroke-dasharray="1.41 10.41" stroke-dashoffset="-11.12"/><path style="stroke-width:1.12" d="M777.4,112.2 L856.1,163.9" stroke-dasharray="1.41 10.37" stroke-dashoffset="-11.07"/><path style="stroke-width:1.12" d="M780.8,110.1 L859.2,161.5" stroke-dasharray="1.41 10.32" stroke-dashoffset="-11.02"/><path style="stroke-width:1.12" d="M784.2,107.9 L862.3,159.1" stroke-dasharray="1.41 10.27" stroke-dashoffset="-10.97"/><path style="stroke-width:1.12" d="M787.5,105.8 L865.3,156.8" stroke-dasharray="1.41 10.22" stroke-dashoffset="-10.93"/><path style="stroke-width:1.07" d="M795.6,100.7 L872.7,151.1" stroke-dasharray="1.33 10.18" stroke-dashoffset="-10.85"/><path style="stroke-width:1.07" d="M798.9,98.7 L875.7,148.8" stroke-dasharray="1.33 10.14" stroke-dashoffset="-10.80"/><path style="stroke-width:1.07" d="M802.1,96.6 L878.6,146.5" stroke-dasharray="1.33 10.09" stroke-dashoffset="-10.76"/><path style="stroke-width:1.07" d="M805.3,94.6 L881.6,144.3" stroke-dasharray="1.33 10.05" stroke-dashoffset="-10.71"/><path style="stroke-width:1.07" d="M808.5,92.6 L884.5,142.0" stroke-dasharray="1.33 10.00" stroke-dashoffset="-10.67"/><path style="stroke-width:1.01" d="M816.2,87.7 L891.5,136.6" stroke-dasharray="1.26 9.96" stroke-dashoffset="-10.59"/><path style="stroke-width:1.01" d="M819.2,85.8 L894.3,134.5" stroke-dasharray="1.26 9.92" stroke-dashoffset="-10.55"/><path style="stroke-width:1.01" d="M822.3,83.9 L897.1,132.3" stroke-dasharray="1.26 9.87" stroke-dashoffset="-10.51"/><path style="stroke-width:1.01" d="M825.4,81.9 L899.9,130.2" stroke-dasharray="1.26 9.83" stroke-dashoffset="-10.46"/><path style="stroke-width:1.01" d="M828.4,80.0 L902.6,128.1" stroke-dasharray="1.26 9.79" stroke-dashoffset="-10.42"/><path style="stroke-width:0.96" d="M835.7,75.4 L909.2,122.9" stroke-dasharray="1.20 9.75" stroke-dashoffset="-10.35"/><path style="stroke-width:0.96" d="M838.6,73.6 L911.9,120.9" stroke-dasharray="1.20 9.71" stroke-dashoffset="-10.31"/><path style="stroke-width:0.96" d="M841.5,71.7 L914.6,118.8" stroke-dasharray="1.20 9.67" stroke-dashoffset="-10.27"/><path style="stroke-width:0.96" d="M844.4,69.9 L917.2,116.8" stroke-dasharray="1.20 9.62" stroke-dashoffset="-10.23"/><path style="stroke-width:0.96" d="M847.3,68.1 L919.8,114.8" stroke-dasharray="1.20 9.58" stroke-dashoffset="-10.18"/><path style="stroke-width:0.91" d="M854.2,63.7 L926.1,109.9" stroke-dasharray="1.14 9.54" stroke-dashoffset="-10.12"/><path style="stroke-width:0.91" d="M857.0,62.0 L928.7,108.0" stroke-dasharray="1.14 9.51" stroke-dashoffset="-10.08"/><path style="stroke-width:0.91" d="M859.8,60.2 L931.2,106.0" stroke-dasharray="1.14 9.47" stroke-dashoffset="-10.04"/><path style="stroke-width:0.91" d="M862.5,58.5 L933.7,104.1" stroke-dasharray="1.14 9.43" stroke-dashoffset="-10.00"/><path style="stroke-width:0.91" d="M865.2,56.8 L936.2,102.2" stroke-dasharray="1.14 9.39" stroke-dashoffset="-9.96"/></g>
<path class="ed" d="M661.0,75.0 L830.0,187.0"/>
<path class="fr" d="M797.0,-4.0 L893.0,-49.0 L1035.0,41.0 L951.0,91.0 Z"/>
<path class="nv" d="M799.5,-3.1 L815.2,-10.5 L888.3,34.8 L873.6,42.6 ZM816.4,-11.0 L831.7,-18.3 L903.8,26.6 L889.4,34.2 ZM832.9,-18.8 L847.9,-25.9 L919.0,18.6 L904.9,26.1 ZM849.0,-26.4 L863.7,-33.3 L933.8,10.8 L920.1,18.1 ZM864.8,-33.8 L879.1,-40.5 L948.4,3.2 L934.9,10.3 ZM880.2,-41.0 L894.2,-47.6 L962.6,-4.3 L949.4,2.6 ZM877.4,45.0 L892.1,37.2 L963.5,81.4 L949.7,89.6 ZM893.2,36.6 L907.6,29.0 L978.0,72.8 L964.5,80.8 ZM908.7,28.4 L922.7,21.0 L992.2,64.4 L979.0,72.2 ZM923.8,20.4 L937.5,13.1 L1006.0,56.2 L993.1,63.8 ZM938.5,12.6 L952.0,5.4 L1019.6,48.1 L1007.0,55.6 ZM953.0,4.9 L966.1,-2.1 L1032.9,40.2 L1020.5,47.5 Z"/>
<path class="gp" d="M808.9,2.7 L824.4,-4.8M818.2,8.4 L833.6,0.9M827.5,14.2 L842.8,6.6M836.8,19.9 L852.0,12.3M846.0,25.6 L861.1,18.0M855.2,31.3 L870.2,23.6M864.4,37.0 L879.3,29.2M825.6,-5.3 L840.8,-12.6M834.8,0.4 L849.9,-6.9M844.0,6.1 L859.0,-1.3M853.1,11.7 L868.0,4.3M862.2,17.4 L877.0,9.9M871.3,23.0 L886.0,15.5M880.4,28.6 L894.9,21.1M842.0,-13.1 L856.9,-20.2M851.0,-7.5 L865.8,-14.6M860.1,-1.8 L874.7,-9.1M869.1,3.8 L883.6,-3.5M878.1,9.4 L892.5,2.1M887.1,15.0 L901.4,7.6M896.0,20.5 L910.2,13.1M858.0,-20.8 L872.5,-27.7M866.9,-15.2 L881.4,-22.2M875.8,-9.6 L890.2,-16.6M884.7,-4.0 L899.0,-11.1M893.6,1.5 L907.7,-5.6M902.4,7.1 L916.5,-0.1M911.3,12.6 L925.2,5.4M873.6,-28.2 L887.9,-35.0M882.4,-22.7 L896.6,-29.5M891.2,-17.2 L905.3,-24.0M900.0,-11.6 L913.9,-18.6M908.8,-6.1 L922.6,-13.1M917.5,-0.7 L931.2,-7.7M926.2,4.8 L939.8,-2.3M888.9,-35.5 L902.8,-42.2M897.6,-30.0 L911.4,-36.7M906.3,-24.6 L920.0,-31.3M915.0,-19.1 L928.6,-25.9M923.6,-13.6 L937.1,-20.5M932.2,-8.2 L945.6,-15.1M940.8,-2.8 L954.1,-9.7M886.6,50.6 L901.1,42.8M895.7,56.2 L910.1,48.3M904.7,61.8 L919.1,53.9M913.8,67.4 L928.0,59.4M922.8,73.0 L936.9,64.9M931.8,78.5 L945.8,70.4M940.8,84.1 L954.7,75.9M902.2,42.2 L916.5,34.5M911.2,47.7 L925.3,40.0M920.2,53.3 L934.2,45.5M929.1,58.8 L943.0,51.0M938.0,64.3 L951.8,56.5M946.8,69.8 L960.5,61.9M955.7,75.3 L969.3,67.4M917.5,33.9 L931.5,26.4M926.4,39.5 L940.2,31.9M935.2,45.0 L948.9,37.4M944.0,50.4 L957.6,42.8M952.8,55.9 L966.3,48.2M961.6,61.4 L974.9,53.6M970.3,66.8 L983.6,59.0M932.5,25.9 L946.1,18.5M941.2,31.3 L954.8,24.0M950.0,36.8 L963.4,29.4M958.6,42.2 L972.0,34.8M967.3,47.6 L980.5,40.1M975.9,53.0 L989.0,45.5M984.6,58.4 L997.5,50.8M947.2,18.0 L960.5,10.8M955.8,23.4 L969.0,16.2M964.4,28.8 L977.5,21.5M972.9,34.2 L986.0,26.9M981.5,39.6 L994.4,32.2M990.0,44.9 L1002.8,37.5M998.5,50.3 L1011.2,42.8M961.5,10.3 L974.5,3.2M970.0,15.6 L982.9,8.6M978.5,21.0 L991.3,13.9M986.9,26.3 L999.7,19.2M995.4,31.7 L1008.0,24.5M1003.8,37.0 L1016.3,29.7M1012.2,42.3 L1024.6,35.0"/>
<path class="gr" d="M802.1,-4.4 L876.1,41.3M804.8,-5.6 L878.5,40.0M807.4,-6.8 L881.0,38.7M810.0,-8.1 L883.5,37.4M812.6,-9.3 L885.9,36.1M818.9,-12.3 L891.9,33.0M821.5,-13.5 L894.3,31.7M824.1,-14.7 L896.7,30.4M826.6,-15.9 L899.1,29.2M829.2,-17.1 L901.5,27.9M835.4,-20.0 L907.3,24.8M837.9,-21.2 L909.7,23.6M840.4,-22.3 L912.0,22.3M842.9,-23.5 L914.3,21.1M845.4,-24.7 L916.7,19.9M851.5,-27.5 L922.4,16.9M853.9,-28.7 L924.7,15.6M856.4,-29.9 L927.0,14.4M858.8,-31.0 L929.3,13.2M861.2,-32.1 L931.6,12.0M867.2,-34.9 L937.1,9.1M869.6,-36.1 L939.4,7.9M872.0,-37.2 L941.7,6.7M874.4,-38.3 L943.9,5.5M876.7,-39.4 L946.1,4.3M882.5,-42.2 L951.6,1.5M884.9,-43.3 L953.8,0.3M887.2,-44.4 L956.0,-0.9M889.6,-45.5 L958.2,-2.0M891.9,-46.6 L960.4,-3.2M879.9,43.7 L952.0,88.2M882.4,42.4 L954.3,86.8M884.8,41.1 L956.6,85.5M887.3,39.8 L958.9,84.1M889.7,38.5 L961.2,82.8M895.6,35.3 L966.8,79.5M898.1,34.0 L969.0,78.1M900.4,32.8 L971.3,76.8M902.8,31.5 L973.5,75.4M905.2,30.2 L975.8,74.1M911.0,27.2 L981.2,70.9M913.4,25.9 L983.4,69.6M915.7,24.7 L985.6,68.3M918.1,23.4 L987.8,67.0M920.4,22.2 L990.0,65.7M926.1,19.2 L995.3,62.5M928.4,17.9 L997.5,61.2M930.7,16.7 L999.6,60.0M932.9,15.5 L1001.8,58.7M935.2,14.3 L1003.9,57.4M940.8,11.4 L1009.1,54.3M943.0,10.2 L1011.2,53.1M945.3,9.0 L1013.3,51.8M947.5,7.8 L1015.4,50.6M949.7,6.6 L1017.5,49.3M955.2,3.7 L1022.6,46.3M957.4,2.5 L1024.7,45.1M959.6,1.4 L1026.7,43.9M961.8,0.2 L1028.8,42.6M963.9,-0.9 L1030.8,41.4"/>
<g class="dt"><path style="stroke-width:0.81" d="M802.1,-4.4 L876.1,41.3" stroke-dasharray="1.01 9.85" stroke-dashoffset="-10.36"/><path style="stroke-width:0.81" d="M804.8,-5.6 L878.5,40.0" stroke-dasharray="1.01 9.83" stroke-dashoffset="-10.33"/><path style="stroke-width:0.81" d="M807.4,-6.8 L881.0,38.7" stroke-dasharray="1.01 9.81" stroke-dashoffset="-10.31"/><path style="stroke-width:0.81" d="M810.0,-8.1 L883.5,37.4" stroke-dasharray="1.01 9.79" stroke-dashoffset="-10.29"/><path style="stroke-width:0.81" d="M812.6,-9.3 L885.9,36.1" stroke-dasharray="1.01 9.76" stroke-dashoffset="-10.27"/><path style="stroke-width:0.79" d="M818.9,-12.3 L891.9,33.0" stroke-dasharray="0.99 9.74" stroke-dashoffset="-10.23"/><path style="stroke-width:0.79" d="M821.5,-13.5 L894.3,31.7" stroke-dasharray="0.99 9.71" stroke-dashoffset="-10.21"/><path style="stroke-width:0.79" d="M824.1,-14.7 L896.7,30.4" stroke-dasharray="0.99 9.69" stroke-dashoffset="-10.19"/><path style="stroke-width:0.79" d="M826.6,-15.9 L899.1,29.2" stroke-dasharray="0.99 9.67" stroke-dashoffset="-10.17"/><path style="stroke-width:0.79" d="M829.2,-17.1 L901.5,27.9" stroke-dasharray="0.99 9.65" stroke-dashoffset="-10.15"/><path style="stroke-width:0.77" d="M835.4,-20.0 L907.3,24.8" stroke-dasharray="0.97 9.62" stroke-dashoffset="-10.11"/><path style="stroke-width:0.77" d="M837.9,-21.2 L909.7,23.6" stroke-dasharray="0.97 9.60" stroke-dashoffset="-10.09"/><path style="stroke-width:0.77" d="M840.4,-22.3 L912.0,22.3" stroke-dasharray="0.97 9.58" stroke-dashoffset="-10.07"/><path style="stroke-width:0.77" d="M842.9,-23.5 L914.3,21.1" stroke-dasharray="0.97 9.56" stroke-dashoffset="-10.05"/><path style="stroke-width:0.77" d="M845.4,-24.7 L916.7,19.9" stroke-dasharray="0.97 9.54" stroke-dashoffset="-10.03"/><path style="stroke-width:0.76" d="M851.5,-27.5 L922.4,16.9" stroke-dasharray="0.95 9.51" stroke-dashoffset="-9.99"/><path style="stroke-width:0.76" d="M853.9,-28.7 L924.7,15.6" stroke-dasharray="0.95 9.49" stroke-dashoffset="-9.97"/><path style="stroke-width:0.76" d="M856.4,-29.9 L927.0,14.4" stroke-dasharray="0.95 9.47" stroke-dashoffset="-9.95"/><path style="stroke-width:0.76" d="M858.8,-31.0 L929.3,13.2" stroke-dasharray="0.95 9.45" stroke-dashoffset="-9.93"/><path style="stroke-width:0.76" d="M861.2,-32.1 L931.6,12.0" stroke-dasharray="0.95 9.43" stroke-dashoffset="-9.91"/><path style="stroke-width:0.74" d="M867.2,-34.9 L937.1,9.1" stroke-dasharray="0.93 9.41" stroke-dashoffset="-9.87"/><path style="stroke-width:0.74" d="M869.6,-36.1 L939.4,7.9" stroke-dasharray="0.93 9.39" stroke-dashoffset="-9.85"/><path style="stroke-width:0.74" d="M872.0,-37.2 L941.7,6.7" stroke-dasharray="0.93 9.37" stroke-dashoffset="-9.83"/><path style="stroke-width:0.74" d="M874.4,-38.3 L943.9,5.5" stroke-dasharray="0.93 9.35" stroke-dashoffset="-9.81"/><path style="stroke-width:0.74" d="M876.7,-39.4 L946.1,4.3" stroke-dasharray="0.93 9.33" stroke-dashoffset="-9.79"/><path style="stroke-width:0.72" d="M882.5,-42.2 L951.6,1.5" stroke-dasharray="0.91 9.30" stroke-dashoffset="-9.76"/><path style="stroke-width:0.72" d="M884.9,-43.3 L953.8,0.3" stroke-dasharray="0.91 9.28" stroke-dashoffset="-9.74"/><path style="stroke-width:0.72" d="M887.2,-44.4 L956.0,-0.9" stroke-dasharray="0.91 9.26" stroke-dashoffset="-9.72"/><path style="stroke-width:0.72" d="M889.6,-45.5 L958.2,-2.0" stroke-dasharray="0.91 9.25" stroke-dashoffset="-9.70"/><path style="stroke-width:0.72" d="M891.9,-46.6 L960.4,-3.2" stroke-dasharray="0.91 9.23" stroke-dashoffset="-9.68"/><path style="stroke-width:0.78" d="M879.9,43.7 L952.0,88.2" stroke-dasharray="0.97 9.62" stroke-dashoffset="-10.11"/><path style="stroke-width:0.78" d="M882.4,42.4 L954.3,86.8" stroke-dasharray="0.97 9.60" stroke-dashoffset="-10.09"/><path style="stroke-width:0.78" d="M884.8,41.1 L956.6,85.5" stroke-dasharray="0.97 9.58" stroke-dashoffset="-10.07"/><path style="stroke-width:0.78" d="M887.3,39.8 L958.9,84.1" stroke-dasharray="0.97 9.56" stroke-dashoffset="-10.05"/><path style="stroke-width:0.78" d="M889.7,38.5 L961.2,82.8" stroke-dasharray="0.97 9.54" stroke-dashoffset="-10.03"/><path style="stroke-width:0.76" d="M895.6,35.3 L966.8,79.5" stroke-dasharray="0.95 9.52" stroke-dashoffset="-9.99"/><path style="stroke-width:0.76" d="M898.1,34.0 L969.0,78.1" stroke-dasharray="0.95 9.50" stroke-dashoffset="-9.97"/><path style="stroke-width:0.76" d="M900.4,32.8 L971.3,76.8" stroke-dasharray="0.95 9.48" stroke-dashoffset="-9.95"/><path style="stroke-width:0.76" d="M902.8,31.5 L973.5,75.4" stroke-dasharray="0.95 9.46" stroke-dashoffset="-9.93"/><path style="stroke-width:0.76" d="M905.2,30.2 L975.8,74.1" stroke-dasharray="0.95 9.44" stroke-dashoffset="-9.91"/><path style="stroke-width:0.74" d="M911.0,27.2 L981.2,70.9" stroke-dasharray="0.93 9.41" stroke-dashoffset="-9.87"/><path style="stroke-width:0.74" d="M913.4,25.9 L983.4,69.6" stroke-dasharray="0.93 9.39" stroke-dashoffset="-9.85"/><path style="stroke-width:0.74" d="M915.7,24.7 L985.6,68.3" stroke-dasharray="0.93 9.37" stroke-dashoffset="-9.83"/><path style="stroke-width:0.74" d="M918.1,23.4 L987.8,67.0" stroke-dasharray="0.93 9.35" stroke-dashoffset="-9.81"/><path style="stroke-width:0.74" d="M920.4,22.2 L990.0,65.7" stroke-dasharray="0.93 9.33" stroke-dashoffset="-9.79"/><path style="stroke-width:0.73" d="M926.1,19.2 L995.3,62.5" stroke-dasharray="0.91 9.30" stroke-dashoffset="-9.76"/><path style="stroke-width:0.73" d="M928.4,17.9 L997.5,61.2" stroke-dasharray="0.91 9.28" stroke-dashoffset="-9.74"/><path style="stroke-width:0.73" d="M930.7,16.7 L999.6,60.0" stroke-dasharray="0.91 9.27" stroke-dashoffset="-9.72"/><path style="stroke-width:0.73" d="M932.9,15.5 L1001.8,58.7" stroke-dasharray="0.91 9.25" stroke-dashoffset="-9.70"/><path style="stroke-width:0.73" d="M935.2,14.3 L1003.9,57.4" stroke-dasharray="0.91 9.23" stroke-dashoffset="-9.68"/><path style="stroke-width:0.71" d="M940.8,11.4 L1009.1,54.3" stroke-dasharray="0.89 9.20" stroke-dashoffset="-9.65"/><path style="stroke-width:0.71" d="M943.0,10.2 L1011.2,53.1" stroke-dasharray="0.89 9.18" stroke-dashoffset="-9.63"/><path style="stroke-width:0.71" d="M945.3,9.0 L1013.3,51.8" stroke-dasharray="0.89 9.16" stroke-dashoffset="-9.61"/><path style="stroke-width:0.71" d="M947.5,7.8 L1015.4,50.6" stroke-dasharray="0.89 9.15" stroke-dashoffset="-9.59"/><path style="stroke-width:0.71" d="M949.7,6.6 L1017.5,49.3" stroke-dasharray="0.89 9.13" stroke-dashoffset="-9.57"/><path style="stroke-width:0.70" d="M955.2,3.7 L1022.6,46.3" stroke-dasharray="0.87 9.10" stroke-dashoffset="-9.54"/><path style="stroke-width:0.70" d="M957.4,2.5 L1024.7,45.1" stroke-dasharray="0.87 9.08" stroke-dashoffset="-9.52"/><path style="stroke-width:0.70" d="M959.6,1.4 L1026.7,43.9" stroke-dasharray="0.87 9.07" stroke-dashoffset="-9.50"/><path style="stroke-width:0.70" d="M961.8,0.2 L1028.8,42.6" stroke-dasharray="0.87 9.05" stroke-dashoffset="-9.48"/><path style="stroke-width:0.70" d="M963.9,-0.9 L1030.8,41.4" stroke-dasharray="0.87 9.03" stroke-dashoffset="-9.46"/></g>
<path class="ed" d="M797.0,-4.0 L951.0,91.0"/>
<path class="fr" d="M903.0,-56.0 L1003.0,-106.0 L1123.0,-8.0 L1040.0,39.0 Z"/>
<path class="nv" d="M905.5,-55.0 L921.5,-63.0 L989.6,-14.5 L975.0,-6.7 ZM922.7,-63.6 L938.4,-71.5 L1005.0,-22.7 L990.7,-15.1 ZM939.6,-72.1 L955.2,-79.9 L1020.3,-30.9 L1006.1,-23.3 ZM956.3,-80.5 L971.7,-88.1 L1035.4,-38.9 L1021.3,-31.4 ZM972.8,-88.7 L988.0,-96.3 L1050.2,-46.9 L1036.4,-39.5 ZM989.1,-96.9 L1004.1,-104.4 L1065.0,-54.7 L1051.3,-47.4 ZM978.4,-4.4 L992.9,-12.1 L1052.3,30.2 L1039.1,37.7 ZM994.0,-12.7 L1008.3,-20.3 L1066.4,22.2 L1053.3,29.7 ZM1009.4,-20.9 L1023.5,-28.5 L1080.4,14.4 L1067.4,21.7 ZM1024.5,-29.0 L1038.5,-36.5 L1094.2,6.6 L1081.3,13.8 ZM1039.5,-37.1 L1053.3,-44.4 L1107.8,-1.1 L1095.1,6.0 ZM1054.3,-45.0 L1067.9,-52.3 L1121.3,-8.8 L1108.7,-1.7 Z"/>
<path class="gp" d="M914.7,-48.6 L930.5,-56.6M923.8,-42.3 L939.4,-50.2M932.7,-36.1 L948.1,-44.0M941.4,-30.0 L956.7,-37.9M950.0,-24.1 L965.1,-31.9M958.5,-18.2 L973.4,-26.0M966.8,-12.4 L981.5,-20.2M931.7,-57.2 L947.2,-65.0M940.5,-50.8 L955.9,-58.7M949.2,-44.6 L964.4,-52.4M957.8,-38.5 L972.8,-46.3M966.2,-32.5 L981.1,-40.3M974.5,-26.6 L989.2,-34.3M982.6,-20.8 L997.2,-28.5M948.4,-65.6 L963.8,-73.4M957.1,-59.3 L972.3,-67.0M965.6,-53.0 L980.6,-60.7M974.0,-46.9 L988.8,-54.6M982.2,-40.8 L996.9,-48.5M990.3,-34.9 L1004.8,-42.5M998.3,-29.0 L1012.6,-36.6M964.9,-74.0 L980.1,-81.6M973.4,-67.6 L988.4,-75.2M981.7,-61.3 L996.5,-68.9M989.9,-55.1 L1004.6,-62.7M998.0,-49.1 L1012.4,-56.6M1005.9,-43.1 L1020.2,-50.6M1013.7,-37.2 L1027.8,-44.7M981.2,-82.2 L996.2,-89.8M989.5,-75.8 L1004.3,-83.3M997.7,-69.5 L1012.3,-77.0M1005.7,-63.3 L1020.1,-70.8M1013.5,-57.2 L1027.8,-64.7M1021.3,-51.2 L1035.4,-58.6M1028.9,-45.3 L1042.9,-52.7M997.3,-90.3 L1012.1,-97.8M1005.4,-83.9 L1020.1,-91.3M1013.4,-77.6 L1027.8,-85.0M1021.2,-71.3 L1035.5,-78.7M1028.9,-65.2 L1043.0,-72.6M1036.5,-59.2 L1050.5,-66.5M1043.9,-53.3 L1057.8,-60.6M986.4,1.2 L1000.8,-6.5M994.3,6.7 L1008.5,-1.0M1002.1,12.0 L1016.1,4.4M1009.7,17.3 L1023.6,9.7M1017.2,22.6 L1030.9,15.0M1024.6,27.7 L1038.2,20.1M1031.9,32.7 L1045.3,25.2M1001.8,-7.1 L1016.0,-14.7M1009.5,-1.6 L1023.5,-9.2M1017.1,3.8 L1030.9,-3.7M1024.6,9.1 L1038.3,1.6M1031.9,14.4 L1045.5,6.9M1039.2,19.6 L1052.6,12.1M1046.3,24.6 L1059.6,17.2M1017.0,-15.3 L1031.0,-22.8M1024.6,-9.8 L1038.4,-17.3M1032.0,-4.3 L1045.6,-11.8M1039.3,1.1 L1052.8,-6.4M1046.5,6.3 L1059.9,-1.1M1053.6,11.5 L1066.8,4.1M1060.5,16.6 L1073.6,9.3M1032.0,-23.4 L1045.8,-30.8M1039.4,-17.8 L1053.0,-25.2M1046.7,-12.3 L1060.2,-19.7M1053.8,-6.9 L1067.2,-14.3M1060.9,-1.6 L1074.1,-9.0M1067.8,3.6 L1080.9,-3.7M1074.6,8.7 L1087.6,1.5M1046.9,-31.4 L1060.5,-38.7M1054.1,-25.8 L1067.6,-33.1M1061.2,-20.3 L1074.5,-27.6M1068.2,-14.9 L1081.4,-22.1M1075.1,-9.5 L1088.1,-16.8M1081.9,-4.3 L1094.8,-11.5M1088.5,0.9 L1101.3,-6.3M1061.5,-39.3 L1075.0,-46.5M1068.6,-33.7 L1081.9,-40.9M1075.5,-28.1 L1088.7,-35.3M1082.4,-22.7 L1095.4,-29.9M1089.1,-17.3 L1102.0,-24.5M1095.8,-12.0 L1108.5,-19.2M1102.3,-6.8 L1114.9,-13.9"/>
<path class="gr" d="M908.2,-56.3 L977.5,-8.0M910.8,-57.7 L979.9,-9.3M913.5,-59.0 L982.3,-10.6M916.2,-60.3 L984.7,-11.9M918.8,-61.7 L987.2,-13.2M925.3,-64.9 L993.1,-16.3M927.9,-66.2 L995.5,-17.6M930.6,-67.6 L997.9,-18.9M933.2,-68.9 L1000.3,-20.2M935.8,-70.2 L1002.6,-21.5M942.2,-73.4 L1008.5,-24.6M944.8,-74.7 L1010.8,-25.8M947.4,-76.0 L1013.2,-27.1M950.0,-77.3 L1015.6,-28.4M952.6,-78.6 L1017.9,-29.6M958.9,-81.7 L1023.7,-32.7M961.5,-83.0 L1026.0,-33.9M964.0,-84.3 L1028.4,-35.2M966.6,-85.6 L1030.7,-36.4M969.1,-86.9 L1033.0,-37.7M975.4,-90.0 L1038.7,-40.7M977.9,-91.3 L1041.0,-41.9M980.4,-92.5 L1043.3,-43.2M982.9,-93.8 L1045.6,-44.4M985.5,-95.1 L1047.9,-45.6M991.6,-98.1 L1053.6,-48.6M994.1,-99.4 L1055.9,-49.9M996.6,-100.6 L1058.1,-51.1M999.1,-101.9 L1060.4,-52.3M1001.6,-103.1 L1062.7,-53.5M980.9,-5.7 L1041.3,36.5M983.3,-7.0 L1043.5,35.2M985.7,-8.2 L1045.7,34.0M988.1,-9.5 L1047.9,32.7M990.5,-10.8 L1050.1,31.5M996.4,-14.0 L1055.5,28.4M998.8,-15.2 L1057.7,27.2M1001.2,-16.5 L1059.9,25.9M1003.5,-17.8 L1062.1,24.7M1005.9,-19.1 L1064.3,23.5M1011.7,-22.2 L1069.6,20.5M1014.1,-23.4 L1071.8,19.2M1016.4,-24.7 L1073.9,18.0M1018.8,-26.0 L1076.1,16.8M1021.1,-27.2 L1078.2,15.6M1026.9,-30.3 L1083.5,12.6M1029.2,-31.5 L1085.6,11.4M1031.5,-32.8 L1087.8,10.2M1033.8,-34.0 L1089.9,9.0M1036.2,-35.3 L1092.0,7.8M1041.8,-38.3 L1097.2,4.8M1044.1,-39.5 L1099.4,3.6M1046.4,-40.8 L1101.5,2.4M1048.7,-42.0 L1103.6,1.2M1051.0,-43.2 L1105.7,0.0M1056.6,-46.2 L1110.8,-2.9M1058.9,-47.4 L1112.9,-4.1M1061.2,-48.6 L1115.0,-5.2M1063.4,-49.9 L1117.1,-6.4M1065.7,-51.1 L1119.2,-7.6"/>
<g class="dt"><path style="stroke-width:0.83" d="M908.2,-56.3 L977.5,-8.0" stroke-dasharray="1.04 9.52" stroke-dashoffset="-10.04"/><path style="stroke-width:0.83" d="M910.8,-57.7 L979.9,-9.3" stroke-dasharray="1.04 9.50" stroke-dashoffset="-10.02"/><path style="stroke-width:0.83" d="M913.5,-59.0 L982.3,-10.6" stroke-dasharray="1.04 9.48" stroke-dashoffset="-10.00"/><path style="stroke-width:0.83" d="M916.2,-60.3 L984.7,-11.9" stroke-dasharray="1.04 9.45" stroke-dashoffset="-9.97"/><path style="stroke-width:0.83" d="M918.8,-61.7 L987.2,-13.2" stroke-dasharray="1.04 9.43" stroke-dashoffset="-9.95"/><path style="stroke-width:0.82" d="M925.3,-64.9 L993.1,-16.3" stroke-dasharray="1.03 9.39" stroke-dashoffset="-9.91"/><path style="stroke-width:0.82" d="M927.9,-66.2 L995.5,-17.6" stroke-dasharray="1.03 9.37" stroke-dashoffset="-9.89"/><path style="stroke-width:0.82" d="M930.6,-67.6 L997.9,-18.9" stroke-dasharray="1.03 9.35" stroke-dashoffset="-9.87"/><path style="stroke-width:0.82" d="M933.2,-68.9 L1000.3,-20.2" stroke-dasharray="1.03 9.33" stroke-dashoffset="-9.85"/><path style="stroke-width:0.82" d="M935.8,-70.2 L1002.6,-21.5" stroke-dasharray="1.03 9.31" stroke-dashoffset="-9.82"/><path style="stroke-width:0.81" d="M942.2,-73.4 L1008.5,-24.6" stroke-dasharray="1.02 9.27" stroke-dashoffset="-9.78"/><path style="stroke-width:0.81" d="M944.8,-74.7 L1010.8,-25.8" stroke-dasharray="1.02 9.25" stroke-dashoffset="-9.76"/><path style="stroke-width:0.81" d="M947.4,-76.0 L1013.2,-27.1" stroke-dasharray="1.02 9.23" stroke-dashoffset="-9.74"/><path style="stroke-width:0.81" d="M950.0,-77.3 L1015.6,-28.4" stroke-dasharray="1.02 9.21" stroke-dashoffset="-9.72"/><path style="stroke-width:0.81" d="M952.6,-78.6 L1017.9,-29.6" stroke-dasharray="1.02 9.19" stroke-dashoffset="-9.70"/><path style="stroke-width:0.80" d="M958.9,-81.7 L1023.7,-32.7" stroke-dasharray="1.00 9.16" stroke-dashoffset="-9.66"/><path style="stroke-width:0.80" d="M961.5,-83.0 L1026.0,-33.9" stroke-dasharray="1.00 9.14" stroke-dashoffset="-9.64"/><path style="stroke-width:0.80" d="M964.0,-84.3 L1028.4,-35.2" stroke-dasharray="1.00 9.12" stroke-dashoffset="-9.62"/><path style="stroke-width:0.80" d="M966.6,-85.6 L1030.7,-36.4" stroke-dasharray="1.00 9.10" stroke-dashoffset="-9.60"/><path style="stroke-width:0.80" d="M969.1,-86.9 L1033.0,-37.7" stroke-dasharray="1.00 9.08" stroke-dashoffset="-9.58"/><path style="stroke-width:0.79" d="M975.4,-90.0 L1038.7,-40.7" stroke-dasharray="0.99 9.04" stroke-dashoffset="-9.54"/><path style="stroke-width:0.79" d="M977.9,-91.3 L1041.0,-41.9" stroke-dasharray="0.99 9.03" stroke-dashoffset="-9.52"/><path style="stroke-width:0.79" d="M980.4,-92.5 L1043.3,-43.2" stroke-dasharray="0.99 9.01" stroke-dashoffset="-9.50"/><path style="stroke-width:0.79" d="M982.9,-93.8 L1045.6,-44.4" stroke-dasharray="0.99 8.99" stroke-dashoffset="-9.48"/><path style="stroke-width:0.79" d="M985.5,-95.1 L1047.9,-45.6" stroke-dasharray="0.99 8.97" stroke-dashoffset="-9.46"/><path style="stroke-width:0.78" d="M991.6,-98.1 L1053.6,-48.6" stroke-dasharray="0.98 8.94" stroke-dashoffset="-9.42"/><path style="stroke-width:0.78" d="M994.1,-99.4 L1055.9,-49.9" stroke-dasharray="0.98 8.92" stroke-dashoffset="-9.41"/><path style="stroke-width:0.78" d="M996.6,-100.6 L1058.1,-51.1" stroke-dasharray="0.98 8.90" stroke-dashoffset="-9.39"/><path style="stroke-width:0.78" d="M999.1,-101.9 L1060.4,-52.3" stroke-dasharray="0.98 8.88" stroke-dashoffset="-9.37"/><path style="stroke-width:0.78" d="M1001.6,-103.1 L1062.7,-53.5" stroke-dasharray="0.98 8.86" stroke-dashoffset="-9.35"/><path style="stroke-width:0.77" d="M980.9,-5.7 L1041.3,36.5" stroke-dasharray="0.96 8.25" stroke-dashoffset="-8.73"/><path style="stroke-width:0.77" d="M983.3,-7.0 L1043.5,35.2" stroke-dasharray="0.96 8.23" stroke-dashoffset="-8.71"/><path style="stroke-width:0.77" d="M985.7,-8.2 L1045.7,34.0" stroke-dasharray="0.96 8.21" stroke-dashoffset="-8.69"/><path style="stroke-width:0.77" d="M988.1,-9.5 L1047.9,32.7" stroke-dasharray="0.96 8.20" stroke-dashoffset="-8.68"/><path style="stroke-width:0.77" d="M990.5,-10.8 L1050.1,31.5" stroke-dasharray="0.96 8.18" stroke-dashoffset="-8.66"/><path style="stroke-width:0.76" d="M996.4,-14.0 L1055.5,28.4" stroke-dasharray="0.95 8.15" stroke-dashoffset="-8.62"/><path style="stroke-width:0.76" d="M998.8,-15.2 L1057.7,27.2" stroke-dasharray="0.95 8.13" stroke-dashoffset="-8.60"/><path style="stroke-width:0.76" d="M1001.2,-16.5 L1059.9,25.9" stroke-dasharray="0.95 8.11" stroke-dashoffset="-8.59"/><path style="stroke-width:0.76" d="M1003.5,-17.8 L1062.1,24.7" stroke-dasharray="0.95 8.10" stroke-dashoffset="-8.57"/><path style="stroke-width:0.76" d="M1005.9,-19.1 L1064.3,23.5" stroke-dasharray="0.95 8.08" stroke-dashoffset="-8.55"/><path style="stroke-width:0.75" d="M1011.7,-22.2 L1069.6,20.5" stroke-dasharray="0.93 8.05" stroke-dashoffset="-8.52"/><path style="stroke-width:0.75" d="M1014.1,-23.4 L1071.8,19.2" stroke-dasharray="0.93 8.03" stroke-dashoffset="-8.50"/><path style="stroke-width:0.75" d="M1016.4,-24.7 L1073.9,18.0" stroke-dasharray="0.93 8.02" stroke-dashoffset="-8.48"/><path style="stroke-width:0.75" d="M1018.8,-26.0 L1076.1,16.8" stroke-dasharray="0.93 8.00" stroke-dashoffset="-8.47"/><path style="stroke-width:0.75" d="M1021.1,-27.2 L1078.2,15.6" stroke-dasharray="0.93 7.98" stroke-dashoffset="-8.45"/><path style="stroke-width:0.74" d="M1026.9,-30.3 L1083.5,12.6" stroke-dasharray="0.92 7.96" stroke-dashoffset="-8.42"/><path style="stroke-width:0.74" d="M1029.2,-31.5 L1085.6,11.4" stroke-dasharray="0.92 7.94" stroke-dashoffset="-8.40"/><path style="stroke-width:0.74" d="M1031.5,-32.8 L1087.8,10.2" stroke-dasharray="0.92 7.92" stroke-dashoffset="-8.39"/><path style="stroke-width:0.74" d="M1033.8,-34.0 L1089.9,9.0" stroke-dasharray="0.92 7.91" stroke-dashoffset="-8.37"/><path style="stroke-width:0.74" d="M1036.2,-35.3 L1092.0,7.8" stroke-dasharray="0.92 7.89" stroke-dashoffset="-8.35"/><path style="stroke-width:0.73" d="M1041.8,-38.3 L1097.2,4.8" stroke-dasharray="0.91 7.86" stroke-dashoffset="-8.32"/><path style="stroke-width:0.73" d="M1044.1,-39.5 L1099.4,3.6" stroke-dasharray="0.91 7.85" stroke-dashoffset="-8.30"/><path style="stroke-width:0.73" d="M1046.4,-40.8 L1101.5,2.4" stroke-dasharray="0.91 7.83" stroke-dashoffset="-8.29"/><path style="stroke-width:0.73" d="M1048.7,-42.0 L1103.6,1.2" stroke-dasharray="0.91 7.82" stroke-dashoffset="-8.27"/><path style="stroke-width:0.73" d="M1051.0,-43.2 L1105.7,0.0" stroke-dasharray="0.91 7.80" stroke-dashoffset="-8.26"/><path style="stroke-width:0.72" d="M1056.6,-46.2 L1110.8,-2.9" stroke-dasharray="0.90 7.78" stroke-dashoffset="-8.23"/><path style="stroke-width:0.72" d="M1058.9,-47.4 L1112.9,-4.1" stroke-dasharray="0.90 7.76" stroke-dashoffset="-8.21"/><path style="stroke-width:0.72" d="M1061.2,-48.6 L1115.0,-5.2" stroke-dasharray="0.90 7.75" stroke-dashoffset="-8.20"/><path style="stroke-width:0.72" d="M1063.4,-49.9 L1117.1,-6.4" stroke-dasharray="0.90 7.73" stroke-dashoffset="-8.18"/><path style="stroke-width:0.72" d="M1065.7,-51.1 L1119.2,-7.6" stroke-dasharray="0.90 7.72" stroke-dashoffset="-8.17"/></g>
<path class="ed" d="M903.0,-56.0 L1040.0,39.0"/>
<path class="fr" d="M938.0,542.0 L508.5,931.7 L912.4,1226.4 L1180.0,719.0 Z"/>
<path class="nv" d="M938.3,546.5 L904.9,577.0 L1154.4,759.5 L1175.5,719.9 ZM899.2,582.3 L861.5,616.8 L1127.0,810.9 L1150.8,766.3 ZM854.9,622.8 L812.0,662.0 L1095.8,869.5 L1122.9,818.7 ZM804.5,668.9 L755.2,714.0 L1060.0,936.6 L1091.1,878.3 ZM746.6,721.8 L689.4,774.2 L1018.5,1014.5 L1054.6,946.8 ZM679.4,783.4 L612.3,844.8 L969.9,1105.9 L1012.2,1026.4 ZM600.4,855.6 L520.4,928.8 L912.0,1214.5 L962.4,1119.9 Z"/>
<path class="gp" d="M958.1,560.9 L925.7,592.2M977.9,575.4 L946.5,607.5M997.6,589.9 L967.3,622.7M1017.4,604.3 L988.1,637.9M1037.2,618.8 L1008.9,653.1M1056.9,633.2 L1029.7,668.3M1076.7,647.7 L1050.5,683.5M1096.5,662.1 L1071.3,698.7M1116.2,676.6 L1092.1,713.9M1136.0,691.0 L1112.9,729.1M1155.7,705.5 L1133.6,744.3M920.1,597.6 L883.6,633.0M941.1,613.0 L905.7,649.2M962.1,628.3 L927.9,665.4M983.1,643.7 L950.0,681.5M1004.0,659.0 L972.1,697.7M1025.0,674.3 L994.3,713.9M1046.0,689.7 L1016.4,730.1M1066.9,705.0 L1038.5,746.3M1087.9,720.3 L1060.6,762.4M1108.9,735.6 L1082.8,778.6M1129.8,751.0 L1104.9,794.8M877.3,639.1 L835.7,679.3M899.6,655.5 L859.3,696.6M921.9,671.8 L883.0,713.9M944.3,688.1 L906.6,731.2M966.6,704.4 L930.3,748.5M988.9,720.8 L954.0,765.8M1011.3,737.1 L977.6,783.1M1033.6,753.4 L1001.3,800.4M1055.9,769.7 L1024.9,817.6M1078.2,786.0 L1048.5,834.9M1100.6,802.4 L1072.2,852.2M828.4,686.3 L780.7,732.5M852.3,703.8 L806.1,751.1M876.2,721.3 L831.5,769.7M900.1,738.7 L856.9,788.2M924.0,756.2 L882.3,806.8M947.9,773.6 L907.7,825.3M971.7,791.1 L933.1,843.9M995.6,808.5 L958.5,862.5M1019.5,826.0 L983.9,881.0M1043.4,843.4 L1009.3,899.6M1067.2,860.9 L1034.6,918.1M772.3,740.6 L716.9,794.2M798.0,759.4 L744.3,814.2M823.7,778.1 L771.8,834.3M849.3,796.9 L799.2,854.3M875.0,815.6 L826.6,874.4M900.7,834.4 L854.1,894.4M926.3,853.1 L881.5,914.4M952.0,871.9 L908.9,934.4M977.6,890.6 L936.3,954.5M1003.3,909.4 L963.7,974.5M1028.9,928.1 L991.1,994.5M707.1,803.6 L642.1,866.5M734.9,823.9 L671.9,888.3M762.6,844.2 L701.7,910.1M790.4,864.4 L731.5,931.8M818.1,884.7 L761.4,953.6M845.9,904.9 L791.2,975.4M873.6,925.2 L821.0,997.1M901.3,945.4 L850.8,1018.9M929.1,965.7 L880.5,1040.6M956.8,985.9 L910.3,1062.4M984.5,1006.2 L940.1,1084.1M630.6,877.7 L553.1,952.6M660.8,899.7 L585.8,976.4M690.9,921.8 L618.4,1000.2M721.1,943.8 L651.1,1024.1M751.3,965.8 L683.7,1047.9M781.5,987.8 L716.3,1071.7M811.6,1009.9 L749.0,1095.5M841.8,1031.9 L781.6,1119.3M872.0,1053.9 L814.2,1143.1M902.1,1075.9 L846.8,1166.9M932.3,1097.9 L879.4,1190.7"/>
<path class="gr" d="M933.0,551.4 L1172.1,726.2M927.6,556.3 L1168.7,732.7M922.1,561.4 L1165.2,739.2M916.4,566.5 L1161.7,745.8M910.7,571.7 L1158.1,752.6M893.2,587.8 L1147.0,773.4M887.0,593.4 L1143.1,780.6M880.8,599.1 L1139.2,788.0M874.5,604.9 L1135.2,795.5M868.0,610.8 L1131.1,803.2M848.1,629.0 L1118.6,826.7M841.2,635.4 L1114.2,835.0M834.1,641.9 L1109.7,843.3M826.9,648.5 L1105.2,851.9M819.5,655.2 L1100.5,860.6M796.7,676.0 L1086.2,887.5M788.8,683.3 L1081.2,897.0M780.6,690.7 L1076.0,906.6M772.4,698.3 L1070.8,916.4M763.9,706.1 L1065.5,926.4M737.6,730.1 L1048.9,957.5M728.4,738.5 L1043.1,968.4M719.0,747.1 L1037.2,979.6M709.4,755.9 L1031.1,991.0M699.5,764.9 L1024.9,1002.6M668.9,793.0 L1005.6,1038.9M658.1,802.9 L998.8,1051.6M647.0,813.0 L991.8,1064.7M635.7,823.3 L984.7,1078.1M624.1,833.9 L977.4,1091.8M587.9,867.0 L954.5,1134.7M575.1,878.8 L946.5,1149.8M562.0,890.8 L938.2,1165.4M548.5,903.1 L929.7,1181.3M534.7,915.8 L921.0,1197.7"/>
<g class="dt"><path style="stroke-width:2.85" d="M933.0,551.4 L1172.1,726.2" stroke-dasharray="3.56 21.12" stroke-dashoffset="-22.90"/><path style="stroke-width:2.85" d="M927.6,556.3 L1168.7,732.7" stroke-dasharray="3.56 21.33" stroke-dashoffset="-23.11"/><path style="stroke-width:2.85" d="M922.1,561.4 L1165.2,739.2" stroke-dasharray="3.56 21.54" stroke-dashoffset="-23.32"/><path style="stroke-width:2.85" d="M916.4,566.5 L1161.7,745.8" stroke-dasharray="3.56 21.75" stroke-dashoffset="-23.53"/><path style="stroke-width:2.85" d="M910.7,571.7 L1158.1,752.6" stroke-dasharray="3.56 21.97" stroke-dashoffset="-23.75"/><path style="stroke-width:3.22" d="M893.2,587.8 L1147.0,773.4" stroke-dasharray="4.02 22.18" stroke-dashoffset="-24.19"/><path style="stroke-width:3.22" d="M887.0,593.4 L1143.1,780.6" stroke-dasharray="4.02 22.41" stroke-dashoffset="-24.42"/><path style="stroke-width:3.22" d="M880.8,599.1 L1139.2,788.0" stroke-dasharray="4.02 22.65" stroke-dashoffset="-24.66"/><path style="stroke-width:3.22" d="M874.5,604.9 L1135.2,795.5" stroke-dasharray="4.02 22.89" stroke-dashoffset="-24.90"/><path style="stroke-width:3.22" d="M868.0,610.8 L1131.1,803.2" stroke-dasharray="4.02 23.14" stroke-dashoffset="-25.15"/><path style="stroke-width:3.66" d="M848.1,629.0 L1118.6,826.7" stroke-dasharray="4.58 23.34" stroke-dashoffset="-25.63"/><path style="stroke-width:3.66" d="M841.2,635.4 L1114.2,835.0" stroke-dasharray="4.58 23.60" stroke-dashoffset="-25.89"/><path style="stroke-width:3.66" d="M834.1,641.9 L1109.7,843.3" stroke-dasharray="4.58 23.87" stroke-dashoffset="-26.16"/><path style="stroke-width:3.66" d="M826.9,648.5 L1105.2,851.9" stroke-dasharray="4.58 24.15" stroke-dashoffset="-26.44"/><path style="stroke-width:3.66" d="M819.5,655.2 L1100.5,860.6" stroke-dasharray="4.58 24.43" stroke-dashoffset="-26.72"/><path style="stroke-width:4.21" d="M796.7,676.0 L1086.2,887.5" stroke-dasharray="5.26 24.62" stroke-dashoffset="-27.25"/><path style="stroke-width:4.21" d="M788.8,683.3 L1081.2,897.0" stroke-dasharray="5.26 24.92" stroke-dashoffset="-27.55"/><path style="stroke-width:4.21" d="M780.6,690.7 L1076.0,906.6" stroke-dasharray="5.26 25.23" stroke-dashoffset="-27.86"/><path style="stroke-width:4.21" d="M772.4,698.3 L1070.8,916.4" stroke-dasharray="5.26 25.54" stroke-dashoffset="-28.17"/><path style="stroke-width:4.21" d="M763.9,706.1 L1065.5,926.4" stroke-dasharray="5.26 25.87" stroke-dashoffset="-28.50"/><path style="stroke-width:4.88" d="M737.6,730.1 L1048.9,957.5" stroke-dasharray="6.10 26.02" stroke-dashoffset="-29.08"/><path style="stroke-width:4.88" d="M728.4,738.5 L1043.1,968.4" stroke-dasharray="6.10 26.38" stroke-dashoffset="-29.43"/><path style="stroke-width:4.88" d="M719.0,747.1 L1037.2,979.6" stroke-dasharray="6.10 26.73" stroke-dashoffset="-29.78"/><path style="stroke-width:4.88" d="M709.4,755.9 L1031.1,991.0" stroke-dasharray="6.10 27.10" stroke-dashoffset="-30.15"/><path style="stroke-width:4.88" d="M699.5,764.9 L1024.9,1002.6" stroke-dasharray="6.10 27.48" stroke-dashoffset="-30.53"/><path style="stroke-width:5.73" d="M668.9,793.0 L1005.6,1038.9" stroke-dasharray="7.17 27.58" stroke-dashoffset="-31.16"/><path style="stroke-width:5.73" d="M658.1,802.9 L998.8,1051.6" stroke-dasharray="7.17 27.99" stroke-dashoffset="-31.57"/><path style="stroke-width:5.73" d="M647.0,813.0 L991.8,1064.7" stroke-dasharray="7.17 28.41" stroke-dashoffset="-31.99"/><path style="stroke-width:5.73" d="M635.7,823.3 L984.7,1078.1" stroke-dasharray="7.17 28.84" stroke-dashoffset="-32.42"/><path style="stroke-width:5.73" d="M624.1,833.9 L977.4,1091.8" stroke-dasharray="7.17 29.28" stroke-dashoffset="-32.87"/><path style="stroke-width:6.83" d="M587.9,867.0 L954.5,1134.7" stroke-dasharray="8.53 29.30" stroke-dashoffset="-33.56"/><path style="stroke-width:6.83" d="M575.1,878.8 L946.5,1149.8" stroke-dasharray="8.53 29.78" stroke-dashoffset="-34.05"/><path style="stroke-width:6.83" d="M562.0,890.8 L938.2,1165.4" stroke-dasharray="8.53 30.28" stroke-dashoffset="-34.55"/><path style="stroke-width:6.83" d="M548.5,903.1 L929.7,1181.3" stroke-dasharray="8.53 30.80" stroke-dashoffset="-35.06"/><path style="stroke-width:6.83" d="M534.7,915.8 L921.0,1197.7" stroke-dasharray="8.53 31.32" stroke-dashoffset="-35.59"/></g>
<path class="fr" d="M954.0,539.0 L1153.0,396.0 L1402.0,582.0 L1203.0,725.0 Z"/>
<path class="nv" d="M957.7,540.7 L976.2,527.4 L1219.2,709.0 L1200.7,722.3 ZM977.6,526.4 L996.1,513.1 L1239.1,694.7 L1220.6,708.0 ZM997.5,512.1 L1016.0,498.8 L1259.0,680.4 L1240.5,693.7 ZM1017.4,497.8 L1035.9,484.5 L1278.9,666.1 L1260.4,679.4 ZM1037.3,483.5 L1055.8,470.2 L1298.8,651.8 L1280.3,665.1 ZM1057.2,469.2 L1075.7,455.9 L1318.7,637.5 L1300.2,650.8 ZM1077.1,454.9 L1095.6,441.6 L1338.6,623.2 L1320.1,636.5 ZM1097.0,440.6 L1115.5,427.3 L1358.5,608.9 L1340.0,622.2 ZM1116.9,426.3 L1135.4,413.0 L1378.4,594.6 L1359.9,607.9 ZM1136.8,412.0 L1155.3,398.7 L1398.3,580.3 L1379.8,593.6 Z"/>
<path class="gp" d="M968.7,549.0 L987.2,535.7M979.8,557.2 L998.3,543.9M990.8,565.5 L1009.3,552.2M1001.9,573.7 L1020.4,560.4M1012.9,582.0 L1031.4,568.7M1024.0,590.2 L1042.5,576.9M1035.0,598.5 L1053.5,585.2M1046.1,606.7 L1064.6,593.4M1057.1,615.0 L1075.6,601.7M1068.1,623.2 L1086.7,609.9M1079.2,631.5 L1097.7,618.2M1090.2,639.8 L1108.8,626.5M1101.3,648.0 L1119.8,634.7M1112.3,656.3 L1130.8,643.0M1123.4,664.5 L1141.9,651.2M1134.4,672.8 L1152.9,659.5M1145.5,681.0 L1164.0,667.7M1156.5,689.3 L1175.0,676.0M1167.6,697.5 L1186.1,684.2M1178.6,705.8 L1197.1,692.5M1189.7,714.0 L1208.2,700.7M988.6,534.7 L1007.1,521.4M999.7,542.9 L1018.2,529.6M1010.7,551.2 L1029.2,537.9M1021.8,559.4 L1040.3,546.1M1032.8,567.7 L1051.3,554.4M1043.9,575.9 L1062.4,562.6M1054.9,584.2 L1073.4,570.9M1066.0,592.4 L1084.5,579.1M1077.0,600.7 L1095.5,587.4M1088.0,608.9 L1106.6,595.6M1099.1,617.2 L1117.6,603.9M1110.1,625.5 L1128.7,612.2M1121.2,633.7 L1139.7,620.4M1132.2,642.0 L1150.7,628.7M1143.3,650.2 L1161.8,636.9M1154.3,658.5 L1172.8,645.2M1165.4,666.7 L1183.9,653.4M1176.4,675.0 L1194.9,661.7M1187.5,683.2 L1206.0,669.9M1198.5,691.5 L1217.0,678.2M1209.6,699.7 L1228.1,686.4M1008.5,520.4 L1027.0,507.1M1019.6,528.6 L1038.1,515.3M1030.6,536.9 L1049.1,523.6M1041.7,545.1 L1060.2,531.8M1052.7,553.4 L1071.2,540.1M1063.8,561.6 L1082.3,548.3M1074.8,569.9 L1093.3,556.6M1085.9,578.1 L1104.4,564.8M1096.9,586.4 L1115.4,573.1M1107.9,594.6 L1126.5,581.3M1119.0,602.9 L1137.5,589.6M1130.0,611.2 L1148.6,597.9M1141.1,619.4 L1159.6,606.1M1152.1,627.7 L1170.6,614.4M1163.2,635.9 L1181.7,622.6M1174.2,644.2 L1192.7,630.9M1185.3,652.4 L1203.8,639.1M1196.3,660.7 L1214.8,647.4M1207.4,668.9 L1225.9,655.6M1218.4,677.2 L1236.9,663.9M1229.5,685.4 L1248.0,672.1M1028.4,506.1 L1046.9,492.8M1039.5,514.3 L1058.0,501.0M1050.5,522.6 L1069.0,509.3M1061.6,530.8 L1080.1,517.5M1072.6,539.1 L1091.1,525.8M1083.7,547.3 L1102.2,534.0M1094.7,555.6 L1113.2,542.3M1105.8,563.8 L1124.3,550.5M1116.8,572.1 L1135.3,558.8M1127.8,580.3 L1146.4,567.0M1138.9,588.6 L1157.4,575.3M1149.9,596.9 L1168.5,583.6M1161.0,605.1 L1179.5,591.8M1172.0,613.4 L1190.5,600.1M1183.1,621.6 L1201.6,608.3M1194.1,629.9 L1212.6,616.6M1205.2,638.1 L1223.7,624.8M1216.2,646.4 L1234.7,633.1M1227.3,654.6 L1245.8,641.3M1238.3,662.9 L1256.8,649.6M1249.4,671.1 L1267.9,657.8M1048.3,491.8 L1066.8,478.5M1059.4,500.0 L1077.9,486.7M1070.4,508.3 L1088.9,495.0M1081.5,516.5 L1100.0,503.2M1092.5,524.8 L1111.0,511.5M1103.6,533.0 L1122.1,519.7M1114.6,541.3 L1133.1,528.0M1125.7,549.5 L1144.2,536.2M1136.7,557.8 L1155.2,544.5M1147.7,566.0 L1166.3,552.7M1158.8,574.3 L1177.3,561.0M1169.8,582.6 L1188.4,569.3M1180.9,590.8 L1199.4,577.5M1191.9,599.1 L1210.4,585.8M1203.0,607.3 L1221.5,594.0M1214.0,615.6 L1232.5,602.3M1225.1,623.8 L1243.6,610.5M1236.1,632.1 L1254.6,618.8M1247.2,640.3 L1265.7,627.0M1258.2,648.6 L1276.7,635.3M1269.3,656.8 L1287.8,643.5M1068.2,477.5 L1086.7,464.2M1079.3,485.7 L1097.8,472.4M1090.3,494.0 L1108.8,480.7M1101.4,502.2 L1119.9,488.9M1112.4,510.5 L1130.9,497.2M1123.5,518.7 L1142.0,505.4M1134.5,527.0 L1153.0,513.7M1145.6,535.2 L1164.1,521.9M1156.6,543.5 L1175.1,530.2M1167.6,551.7 L1186.2,538.4M1178.7,560.0 L1197.2,546.7M1189.7,568.3 L1208.3,555.0M1200.8,576.5 L1219.3,563.2M1211.8,584.8 L1230.3,571.5M1222.9,593.0 L1241.4,579.7M1233.9,601.3 L1252.4,588.0M1245.0,609.5 L1263.5,596.2M1256.0,617.8 L1274.5,604.5M1267.1,626.0 L1285.6,612.7M1278.1,634.3 L1296.6,621.0M1289.2,642.5 L1307.7,629.2M1088.1,463.2 L1106.6,449.9M1099.2,471.4 L1117.7,458.1M1110.2,479.7 L1128.7,466.4M1121.3,487.9 L1139.8,474.6M1132.3,496.2 L1150.8,482.9M1143.4,504.4 L1161.9,491.1M1154.4,512.7 L1172.9,499.4M1165.5,520.9 L1184.0,507.6M1176.5,529.2 L1195.0,515.9M1187.5,537.4 L1206.1,524.1M1198.6,545.7 L1217.1,532.4M1209.6,554.0 L1228.2,540.7M1220.7,562.2 L1239.2,548.9M1231.7,570.5 L1250.2,557.2M1242.8,578.7 L1261.3,565.4M1253.8,587.0 L1272.3,573.7M1264.9,595.2 L1283.4,581.9M1275.9,603.5 L1294.4,590.2M1287.0,611.7 L1305.5,598.4M1298.0,620.0 L1316.5,606.7M1309.1,628.2 L1327.6,614.9M1108.0,448.9 L1126.5,435.6M1119.1,457.1 L1137.6,443.8M1130.1,465.4 L1148.6,452.1M1141.2,473.6 L1159.7,460.3M1152.2,481.9 L1170.7,468.6M1163.3,490.1 L1181.8,476.8M1174.3,498.4 L1192.8,485.1M1185.4,506.6 L1203.9,493.3M1196.4,514.9 L1214.9,501.6M1207.4,523.1 L1226.0,509.8M1218.5,531.4 L1237.0,518.1M1229.5,539.7 L1248.1,526.4M1240.6,547.9 L1259.1,534.6M1251.6,556.2 L1270.1,542.9M1262.7,564.4 L1281.2,551.1M1273.7,572.7 L1292.2,559.4M1284.8,580.9 L1303.3,567.6M1295.8,589.2 L1314.3,575.9M1306.9,597.4 L1325.4,584.1M1317.9,605.7 L1336.4,592.4M1329.0,613.9 L1347.5,600.6M1127.9,434.6 L1146.4,421.3M1139.0,442.8 L1157.5,429.5M1150.0,451.1 L1168.5,437.8M1161.1,459.3 L1179.6,446.0M1172.1,467.6 L1190.6,454.3M1183.2,475.8 L1201.7,462.5M1194.2,484.1 L1212.7,470.8M1205.3,492.3 L1223.8,479.0M1216.3,500.6 L1234.8,487.3M1227.3,508.8 L1245.9,495.5M1238.4,517.1 L1256.9,503.8M1249.4,525.4 L1268.0,512.1M1260.5,533.6 L1279.0,520.3M1271.5,541.9 L1290.0,528.6M1282.6,550.1 L1301.1,536.8M1293.6,558.4 L1312.1,545.1M1304.7,566.6 L1323.2,553.3M1315.7,574.9 L1334.2,561.6M1326.8,583.1 L1345.3,569.8M1337.8,591.4 L1356.3,578.1M1348.9,599.6 L1367.4,586.3M1147.8,420.3 L1166.3,407.0M1158.9,428.5 L1177.4,415.2M1169.9,436.8 L1188.4,423.5M1181.0,445.0 L1199.5,431.7M1192.0,453.3 L1210.5,440.0M1203.1,461.5 L1221.6,448.2M1214.1,469.8 L1232.6,456.5M1225.2,478.0 L1243.7,464.7M1236.2,486.3 L1254.7,473.0M1247.2,494.5 L1265.8,481.2M1258.3,502.8 L1276.8,489.5M1269.3,511.1 L1287.9,497.8M1280.4,519.3 L1298.9,506.0M1291.4,527.6 L1309.9,514.3M1302.5,535.8 L1321.0,522.5M1313.5,544.1 L1332.0,530.8M1324.6,552.3 L1343.1,539.0M1335.6,560.6 L1354.1,547.3M1346.7,568.8 L1365.2,555.5M1357.7,577.1 L1376.2,563.8M1368.8,585.3 L1387.3,572.0"/>
<path class="gr" d="M960.8,538.5 L1203.8,720.1M963.9,536.3 L1206.9,717.8M966.9,534.1 L1210.0,715.6M970.0,531.9 L1213.0,713.4M973.1,529.6 L1216.1,711.2M980.7,524.2 L1223.7,705.8M983.8,522.0 L1226.8,703.5M986.8,519.8 L1229.9,701.3M989.9,517.6 L1232.9,699.1M993.0,515.3 L1236.0,696.9M1000.6,509.9 L1243.6,691.5M1003.7,507.7 L1246.7,689.2M1006.7,505.5 L1249.8,687.0M1009.8,503.3 L1252.8,684.8M1012.9,501.0 L1255.9,682.6M1020.5,495.6 L1263.5,677.2M1023.6,493.4 L1266.6,674.9M1026.6,491.2 L1269.7,672.7M1029.7,489.0 L1272.7,670.5M1032.8,486.7 L1275.8,668.3M1040.4,481.3 L1283.4,662.9M1043.5,479.1 L1286.5,660.6M1046.5,476.9 L1289.6,658.4M1049.6,474.7 L1292.6,656.2M1052.7,472.4 L1295.7,654.0M1060.3,467.0 L1303.3,648.6M1063.4,464.8 L1306.4,646.3M1066.4,462.6 L1309.5,644.1M1069.5,460.4 L1312.5,641.9M1072.6,458.1 L1315.6,639.7M1080.2,452.7 L1323.2,634.3M1083.3,450.5 L1326.3,632.0M1086.3,448.3 L1329.4,629.8M1089.4,446.1 L1332.4,627.6M1092.5,443.8 L1335.5,625.4M1100.1,438.4 L1343.1,620.0M1103.2,436.2 L1346.2,617.7M1106.2,434.0 L1349.3,615.5M1109.3,431.8 L1352.3,613.3M1112.4,429.5 L1355.4,611.1M1120.0,424.1 L1363.0,605.7M1123.1,421.9 L1366.1,603.4M1126.1,419.7 L1369.2,601.2M1129.2,417.5 L1372.2,599.0M1132.3,415.2 L1375.3,596.8M1139.9,409.8 L1382.9,591.4M1143.0,407.6 L1386.0,589.1M1146.0,405.4 L1389.1,586.9M1149.1,403.2 L1392.1,584.7M1152.2,400.9 L1395.2,582.5"/>
<g class="dt"><path style="stroke-width:1.06" d="M960.8,538.5 L1203.8,720.1" stroke-dasharray="1.33 12.46" stroke-dashoffset="-13.12"/><path style="stroke-width:1.06" d="M963.9,536.3 L1206.9,717.8" stroke-dasharray="1.33 12.46" stroke-dashoffset="-13.12"/><path style="stroke-width:1.06" d="M966.9,534.1 L1210.0,715.6" stroke-dasharray="1.33 12.46" stroke-dashoffset="-13.12"/><path style="stroke-width:1.06" d="M970.0,531.9 L1213.0,713.4" stroke-dasharray="1.33 12.46" stroke-dashoffset="-13.12"/><path style="stroke-width:1.06" d="M973.1,529.6 L1216.1,711.2" stroke-dasharray="1.33 12.46" stroke-dashoffset="-13.12"/><path style="stroke-width:1.06" d="M980.7,524.2 L1223.7,705.8" stroke-dasharray="1.33 12.46" stroke-dashoffset="-13.12"/><path style="stroke-width:1.06" d="M983.8,522.0 L1226.8,703.5" stroke-dasharray="1.33 12.46" stroke-dashoffset="-13.12"/><path style="stroke-width:1.06" d="M986.8,519.8 L1229.9,701.3" stroke-dasharray="1.33 12.46" stroke-dashoffset="-13.12"/><path style="stroke-width:1.06" d="M989.9,517.6 L1232.9,699.1" stroke-dasharray="1.33 12.46" stroke-dashoffset="-13.12"/><path style="stroke-width:1.06" d="M993.0,515.3 L1236.0,696.9" stroke-dasharray="1.33 12.46" stroke-dashoffset="-13.12"/><path style="stroke-width:1.06" d="M1000.6,509.9 L1243.6,691.5" stroke-dasharray="1.33 12.46" stroke-dashoffset="-13.12"/><path style="stroke-width:1.06" d="M1003.7,507.7 L1246.7,689.2" stroke-dasharray="1.33 12.46" stroke-dashoffset="-13.12"/><path style="stroke-width:1.06" d="M1006.7,505.5 L1249.8,687.0" stroke-dasharray="1.33 12.46" stroke-dashoffset="-13.12"/><path style="stroke-width:1.06" d="M1009.8,503.3 L1252.8,684.8" stroke-dasharray="1.33 12.46" stroke-dashoffset="-13.12"/><path style="stroke-width:1.06" d="M1012.9,501.0 L1255.9,682.6" stroke-dasharray="1.33 12.46" stroke-dashoffset="-13.12"/><path style="stroke-width:1.06" d="M1020.5,495.6 L1263.5,677.2" stroke-dasharray="1.33 12.46" stroke-dashoffset="-13.12"/><path style="stroke-width:1.06" d="M1023.6,493.4 L1266.6,674.9" stroke-dasharray="1.33 12.46" stroke-dashoffset="-13.12"/><path style="stroke-width:1.06" d="M1026.6,491.2 L1269.7,672.7" stroke-dasharray="1.33 12.46" stroke-dashoffset="-13.12"/><path style="stroke-width:1.06" d="M1029.7,489.0 L1272.7,670.5" stroke-dasharray="1.33 12.46" stroke-dashoffset="-13.12"/><path style="stroke-width:1.06" d="M1032.8,486.7 L1275.8,668.3" stroke-dasharray="1.33 12.46" stroke-dashoffset="-13.12"/><path style="stroke-width:1.06" d="M1040.4,481.3 L1283.4,662.9" stroke-dasharray="1.33 12.46" stroke-dashoffset="-13.12"/><path style="stroke-width:1.06" d="M1043.5,479.1 L1286.5,660.6" stroke-dasharray="1.33 12.46" stroke-dashoffset="-13.12"/><path style="stroke-width:1.06" d="M1046.5,476.9 L1289.6,658.4" stroke-dasharray="1.33 12.46" stroke-dashoffset="-13.12"/><path style="stroke-width:1.06" d="M1049.6,474.7 L1292.6,656.2" stroke-dasharray="1.33 12.46" stroke-dashoffset="-13.12"/><path style="stroke-width:1.06" d="M1052.7,472.4 L1295.7,654.0" stroke-dasharray="1.33 12.46" stroke-dashoffset="-13.12"/><path style="stroke-width:1.06" d="M1060.3,467.0 L1303.3,648.6" stroke-dasharray="1.33 12.46" stroke-dashoffset="-13.12"/><path style="stroke-width:1.06" d="M1063.4,464.8 L1306.4,646.3" stroke-dasharray="1.33 12.46" stroke-dashoffset="-13.12"/><path style="stroke-width:1.06" d="M1066.4,462.6 L1309.5,644.1" stroke-dasharray="1.33 12.46" stroke-dashoffset="-13.12"/><path style="stroke-width:1.06" d="M1069.5,460.4 L1312.5,641.9" stroke-dasharray="1.33 12.46" stroke-dashoffset="-13.12"/><path style="stroke-width:1.06" d="M1072.6,458.1 L1315.6,639.7" stroke-dasharray="1.33 12.46" stroke-dashoffset="-13.12"/><path style="stroke-width:1.06" d="M1080.2,452.7 L1323.2,634.3" stroke-dasharray="1.33 12.46" stroke-dashoffset="-13.12"/><path style="stroke-width:1.06" d="M1083.3,450.5 L1326.3,632.0" stroke-dasharray="1.33 12.46" stroke-dashoffset="-13.12"/><path style="stroke-width:1.06" d="M1086.3,448.3 L1329.4,629.8" stroke-dasharray="1.33 12.46" stroke-dashoffset="-13.12"/><path style="stroke-width:1.06" d="M1089.4,446.1 L1332.4,627.6" stroke-dasharray="1.33 12.46" stroke-dashoffset="-13.12"/><path style="stroke-width:1.06" d="M1092.5,443.8 L1335.5,625.4" stroke-dasharray="1.33 12.46" stroke-dashoffset="-13.12"/><path style="stroke-width:1.06" d="M1100.1,438.4 L1343.1,620.0" stroke-dasharray="1.33 12.46" stroke-dashoffset="-13.12"/><path style="stroke-width:1.06" d="M1103.2,436.2 L1346.2,617.7" stroke-dasharray="1.33 12.46" stroke-dashoffset="-13.12"/><path style="stroke-width:1.06" d="M1106.2,434.0 L1349.3,615.5" stroke-dasharray="1.33 12.46" stroke-dashoffset="-13.12"/><path style="stroke-width:1.06" d="M1109.3,431.8 L1352.3,613.3" stroke-dasharray="1.33 12.46" stroke-dashoffset="-13.12"/><path style="stroke-width:1.06" d="M1112.4,429.5 L1355.4,611.1" stroke-dasharray="1.33 12.46" stroke-dashoffset="-13.12"/><path style="stroke-width:1.06" d="M1120.0,424.1 L1363.0,605.7" stroke-dasharray="1.33 12.46" stroke-dashoffset="-13.12"/><path style="stroke-width:1.06" d="M1123.1,421.9 L1366.1,603.4" stroke-dasharray="1.33 12.46" stroke-dashoffset="-13.12"/><path style="stroke-width:1.06" d="M1126.1,419.7 L1369.2,601.2" stroke-dasharray="1.33 12.46" stroke-dashoffset="-13.12"/><path style="stroke-width:1.06" d="M1129.2,417.5 L1372.2,599.0" stroke-dasharray="1.33 12.46" stroke-dashoffset="-13.12"/><path style="stroke-width:1.06" d="M1132.3,415.2 L1375.3,596.8" stroke-dasharray="1.33 12.46" stroke-dashoffset="-13.12"/><path style="stroke-width:1.06" d="M1139.9,409.8 L1382.9,591.4" stroke-dasharray="1.33 12.46" stroke-dashoffset="-13.12"/><path style="stroke-width:1.06" d="M1143.0,407.6 L1386.0,589.1" stroke-dasharray="1.33 12.46" stroke-dashoffset="-13.12"/><path style="stroke-width:1.06" d="M1146.0,405.4 L1389.1,586.9" stroke-dasharray="1.33 12.46" stroke-dashoffset="-13.12"/><path style="stroke-width:1.06" d="M1149.1,403.2 L1392.1,584.7" stroke-dasharray="1.33 12.46" stroke-dashoffset="-13.12"/><path style="stroke-width:1.06" d="M1152.2,400.9 L1395.2,582.5" stroke-dasharray="1.33 12.46" stroke-dashoffset="-13.12"/></g>
<path class="ed" d="M954.0,539.0 L1203.0,725.0"/>
<path d="M973.0,0.0 L1098.0,29.0" stroke="#ff1010" stroke-width="2"/>
<path d="M1098.0,719.0 L1039.0,820.0" stroke="#30b8a8" stroke-width="1.5"/>
<ellipse cx="997.7" cy="133.8" rx="55" ry="18.5" fill="none" stroke="#c4caf0" stroke-width="4.5" opacity="0.95"/>
<ellipse cx="997.7" cy="133.8" rx="49" ry="14.5" fill="none" stroke="#a9d4e6" stroke-width="1" opacity="0.6"/>
<path d="M953.0,116.6 l-5,2.5 l8,1 l5,-2.5 z" fill="#1e4e66"/>
<path d="M966.0,148.4 l-5,2.5 l8,1 l5,-2.5 z" fill="#1e4e66"/>
<path d="M1046.7,141.6 l-5,2.5 l8,1 l5,-2.5 z" fill="#1e4e66"/>
<path d="M958.6,77.5 L986.0,64.0 L1036.3,70.7 L1006.6,87.4 Z" fill="#b4eaea" opacity="0.5"/>
<path d="M958.6,77.5 L1006.6,87.4 L1006.6,141.6 L959.0,129.0 Z" fill="#9ddfe0" opacity="0.93"/>
<path d="M1006.6,87.4 L1036.3,70.7 L1035.8,122.9 L1006.6,141.6 Z" fill="#a2e1e1" opacity="0.93"/>
<path d="M1006.6,87.4 L1006.6,141.6" stroke="#3f8a90" stroke-width="1.2"/>
<path d="M970.0,93.0 L994.0,98.0 L994.0,125.0 L970.0,119.0 Z" fill="#88cdd6"/>
<path d="M1015.0,91.0 L1030.0,84.0 L1030.0,114.0 L1015.0,122.0 Z" fill="#88cdd6"/>
<text transform="translate(970.5,115.0) skewY(9) scale(0.82,1)" font-family="Liberation Sans" font-weight="bold" font-size="14.5" fill="#2b6b62">LEFT</text>
<text transform="translate(1016.5,114.0) skewY(-30) scale(0.5,1.25)" font-family="Liberation Sans" font-weight="bold" font-size="11" fill="#2b6b62">FRONT</text>
<path d="M76.0,742.7 L76.0,696.0" stroke="#0000ff" stroke-width="2.6"/>
<path d="M76.0,687.0 l-3,10 l6,0 z" fill="#0000ff"/>
<path d="M76.0,742.7 L104.0,726.5" stroke="#ff0000" stroke-width="2.6"/>
<path d="M109.0,724.0 l-9,2 l3,5 z" fill="#ff0000"/>
<path d="M76.0,742.7 L33.0,732.5" stroke="#00ee00" stroke-width="2.6"/>
<path d="M25.0,730.5 l8,-1 l-2,6 z" fill="#00ee00"/>
<text x="72.0" y="686.0" font-family="Liberation Serif" font-style="italic" font-weight="bold" font-size="13" fill="#0000ff">z</text>
<text x="107.0" y="728.0" font-family="Liberation Serif" font-style="italic" font-weight="bold" font-size="13" fill="#ff0000">x</text>
<text x="16.0" y="734.0" font-family="Liberation Serif" font-style="italic" font-weight="bold" font-size="13" fill="#00dd00">y</text>
<rect x="913.5" y="674.5" width="174.5" height="134.0" fill="#b4b8dc" opacity="0.55"/>
<text x="990.0" y="689.5" text-anchor="end" font-family="Liberation Sans" font-size="12" fill="#0a0a14">征地红线</text>
<rect x="1007.5" y="684.0" width="62" height="2" fill="#d0202a" opacity="0.9"/>
<text x="990.0" y="715.1" text-anchor="end" font-family="Liberation Sans" font-size="12" fill="#0a0a14">阴影区域</text>
<rect x="1007.5" y="705.6" width="62" height="10" fill="#1c2238" opacity="0.9"/>
<text x="990.0" y="741.3" text-anchor="end" font-family="Liberation Sans" font-size="12" fill="#0a0a14">可布置区域</text>
<rect x="1007.5" y="731.8" width="62" height="10" fill="#1aa89a" opacity="0.9"/>
<text x="990.0" y="766.4" text-anchor="end" font-family="Liberation Sans" font-size="12" fill="#0a0a14">不可利用区域</text>
<rect x="1007.5" y="756.9" width="62" height="10" fill="#8c8c90" opacity="0.9"/>
<text x="990.0" y="791.8" text-anchor="end" font-family="Liberation Sans" font-size="12" fill="#0a0a14">可利用区域</text>
<rect x="1007.5" y="782.3" width="62" height="10" fill="#1e64a8" opacity="0.9"/>
</svg>
</div>

<!-- right panel -->
<div class="panel" style="left:1401px;top:161px;width:275px;height:825px">
  <div class="ph"></div>
  <div class="t" style="left:5px;top:4px;color:#8a8a8a">实时阴影</div>
  <div class="dots" style="left:62px;top:9px;width:175px"></div>
  <svg class="a" style="left:242px;top:5px" width="10" height="12" viewBox="0 0 10 12"><path d="M2.6 0.6 H6.9 V6 H2.6Z" fill="#fff" stroke="#111" stroke-width="1.2"/><path d="M5.6 1 V6" stroke="#111" stroke-width="1.6"/><path d="M0.5 6.3 H8.5" stroke="#111" stroke-width="1.3"/><path d="M4.5 6.5 V11" stroke="#111" stroke-width="1"/></svg>
  <svg class="a" style="left:256px;top:5px" width="11" height="11" viewBox="0 0 11 11"><path d="M1 2 L10 9 M10 2 L1 9" stroke="#111" stroke-width="1.4"/></svg>
</div>
<div class="a" style="left:1401px;top:984px;width:275px;height:22px;background:#ededf2;border-top:1px solid #d0d0dc;border-left:1px solid #d0d0dc;border-right:1px solid #d0d0dc"></div>
<div class="a" style="left:1461px;top:984px;width:62px;height:22px;background:#f5f5f8;border-left:1px solid #d0d0dc;border-right:1px solid #d0d0dc"></div>
<div class="t" style="left:1408px;top:988px">场景属性</div>
<div class="t" style="left:1468px;top:988px;color:#0078d0">实时阴影</div>
<svg class="a" style="left:0;top:0" width="300" height="1006" viewBox="0 0 300 1006">
<rect x="56.5" y="635.5" width="217.0" height="27.0" fill="#f5f5f8"/>
<rect x="56.5" y="735.2" width="217.0" height="72.7" fill="#f5f5f8"/>
<path d="M51.0 808.5 H273.5" stroke="#cfd0de" stroke-width="1"/>
<path d="M51.0 735.5 H273.5" stroke="#cfd0de" stroke-width="1"/>
<path d="M51.0 662.5 H273.5" stroke="#cfd0de" stroke-width="1"/>
<path d="M56.5 635.5 H273.5 V880.6" fill="none" stroke="#cfd0de" stroke-width="1"/>
<path d="M56.5 635.5 V880.6 H273.5" fill="none" stroke="#c6c8d8" stroke-width="1"/>
<path d="M51 881.5 H56.5" stroke="#c6c8d8"/>
<path d="M54 866.5 H56.5M54 852.5 H56.5M54 837.5 H56.5M54 822.5 H56.5M54 793.5 H56.5M54 779.5 H56.5M54 764.5 H56.5M54 750.5 H56.5M54 721.5 H56.5M54 706.5 H56.5M54 692.5 H56.5M54 677.5 H56.5M54 648.5 H56.5" stroke="#c6c8d8"/>
<text x="46" y="885.1" text-anchor="end" font-size="13" font-family="Liberation Sans" fill="#1e1e1e">0</text>
<text x="46" y="812.4" text-anchor="end" font-size="13" font-family="Liberation Sans" fill="#1e1e1e">50</text>
<text x="46" y="739.7" text-anchor="end" font-size="13" font-family="Liberation Sans" fill="#1e1e1e">100</text>
<text x="46" y="667.0" text-anchor="end" font-size="13" font-family="Liberation Sans" fill="#1e1e1e">150</text>
<path d="M78.5 880.6 V885.6M121.5 880.6 V885.6M165.5 880.6 V885.6M208.5 880.6 V885.6M252.5 880.6 V885.6M67.5 880.6 V883.6M100.5 880.6 V883.6M144.5 880.6 V883.6M186.5 880.6 V883.6M230.5 880.6 V883.6M273.5 880.6 V883.6" stroke="#c6c8d8"/>
<rect x="69.4" y="860.8" width="17.4" height="19.8" fill="#1a1a1a" stroke="#222" stroke-width="1"/>
<path d="M78.5 850.3 V860.8" stroke="#1a1a1a"/>
<rect x="62.6" y="830.0" width="30.3" height="20.3" rx="3" fill="#1a1a1a"/>
<text x="77.8" y="844.8" text-anchor="middle" font-size="13" font-family="Liberation Sans" fill="#fff">13.6</text>
<rect x="112.2" y="870.9" width="18.2" height="9.7" fill="#808080" stroke="#555" stroke-width="1"/>
<path d="M121.5 860.4 V870.9" stroke="#7a7a7a"/>
<rect x="105.8" y="840.0" width="29.5" height="20.4" rx="3" fill="#7a7a7a"/>
<text x="120.6" y="854.9" text-anchor="middle" font-size="13" font-family="Liberation Sans" fill="#fff">6.67</text>
<rect x="156.3" y="667.5" width="17.3" height="213.1" fill="#0f6cb2" stroke="#0a3d66" stroke-width="1"/>
<path d="M165.5 656.5 V667.5" stroke="#0f6cb2"/>
<rect x="143.3" y="636.3" width="43.2" height="20.2" rx="3" fill="#0f6cb2"/>
<text x="164.9" y="651.0" text-anchor="middle" font-size="13" font-family="Liberation Sans" fill="#fff">146.55</text>
<rect x="199.0" y="687.0" width="18.2" height="193.6" fill="#12cfa0" stroke="#0a6a50" stroke-width="1"/>
<path d="M208.5 676.7 V687.0" stroke="#14c99c"/>
<rect x="185.7" y="656.5" width="43.6" height="20.2" rx="3" fill="#14c99c"/>
<text x="207.5" y="671.2" text-anchor="middle" font-size="13" font-family="Liberation Sans" fill="#fff">133.13</text>
<rect x="243.0" y="657.8" width="17.8" height="222.8" fill="#c7cba9" stroke="#6a6c58" stroke-width="1"/>
<path d="M252.5 646.4 V657.8" stroke="#c4c8a8"/>
<rect x="229.3" y="626.2" width="43.7" height="20.2" rx="3" fill="#c4c8a8"/>
<text x="251.2" y="640.9" text-anchor="middle" font-size="13" font-family="Liberation Sans" fill="#fff">153.23</text>
<text x="166" y="900.5" text-anchor="middle" font-size="12" fill="#1e1e1e">可利用区域95.6%</text>
<text x="79.3" y="917.5" text-anchor="middle" font-size="12" fill="#1e1e1e">阴影区域8.9%</text>
<text x="245" y="917.5" text-anchor="middle" font-size="12" fill="#1e1e1e">地形地貌</text>
</svg>
<div class="a" style="left:1412px;top:201px;width:253px;height:771px;border:1px solid #d0d0dc"></div>
<div class="a" style="left:1420px;top:194px;width:56px;height:16px;background:#ededf2"></div>
<div class="t" style="left:1424px;top:195px">时间设置</div>
<div class="t" style="left:1429px;top:227px">日</div><div class="t" style="left:1465px;top:227px">期</div>
<div class="inp" style="left:1508px;top:222px;width:140px;height:21px"></div>
<div class="t" style="left:1513px;top:226px;font-size:13px">2023-12-23</div>
<svg class="a" style="left:1633px;top:226px" width="13" height="13" viewBox="0 0 13 13"><rect x="1.5" y="2.5" width="10" height="9" fill="none" stroke="#777" stroke-width="1"/><path d="M1.5 5 H11.5 M4 1 V3 M9 1 V3" stroke="#777"/><rect x="3.5" y="7" width="2" height="2" fill="#777"/></svg>
<div class="t" style="left:1429px;top:259px">纬</div><div class="t" style="left:1465px;top:259px">度</div>
<div class="inp" style="left:1508px;top:254px;width:140px;height:21px"></div>
<div class="t" style="left:1513px;top:258px;font-size:13px">38</div>
<svg class="a" style="left:1470px;top:288px" width="140" height="140" viewBox="1470 288 140 140"><circle cx="1538.5" cy="356.0" r="59.5" fill="none" stroke="#1e1e1e" stroke-width="1.3"/><path d="M1538.5 299.5 L1538.5 307.5M1544.4 299.8 L1543.9 304.8M1550.2 300.7 L1549.2 305.6M1556.0 302.3 L1554.4 307.0M1561.5 304.4 L1559.4 309.0M1566.8 307.1 L1562.8 314.0M1571.7 310.3 L1568.8 314.3M1576.3 314.0 L1573.0 317.7M1580.5 318.2 L1576.8 321.5M1584.2 322.8 L1580.2 325.7M1587.4 327.8 L1580.5 331.8M1590.1 333.0 L1585.5 335.1M1592.2 338.5 L1587.5 340.1M1593.8 344.3 L1588.9 345.3M1594.7 350.1 L1589.7 350.6M1595.0 356.0 L1587.0 356.0M1594.7 361.9 L1589.7 361.4M1593.8 367.7 L1588.9 366.7M1592.2 373.5 L1587.5 371.9M1590.1 379.0 L1585.5 376.9M1587.4 384.2 L1580.5 380.2M1584.2 389.2 L1580.2 386.3M1580.5 393.8 L1576.8 390.5M1576.3 398.0 L1573.0 394.3M1571.7 401.7 L1568.8 397.7M1566.8 404.9 L1562.8 398.0M1561.5 407.6 L1559.4 403.0M1556.0 409.7 L1554.4 405.0M1550.2 411.3 L1549.2 406.4M1544.4 412.2 L1543.9 407.2M1538.5 412.5 L1538.5 404.5M1532.6 412.2 L1533.1 407.2M1526.8 411.3 L1527.8 406.4M1521.0 409.7 L1522.6 405.0M1515.5 407.6 L1517.6 403.0M1510.2 404.9 L1514.2 398.0M1505.3 401.7 L1508.2 397.7M1500.7 398.0 L1504.0 394.3M1496.5 393.8 L1500.2 390.5M1492.8 389.2 L1496.8 386.3M1489.6 384.2 L1496.5 380.2M1486.9 379.0 L1491.5 376.9M1484.8 373.5 L1489.5 371.9M1483.2 367.7 L1488.1 366.7M1482.3 361.9 L1487.3 361.4M1482.0 356.0 L1490.0 356.0M1482.3 350.1 L1487.3 350.6M1483.2 344.3 L1488.1 345.3M1484.8 338.5 L1489.5 340.1M1486.9 333.0 L1491.5 335.1M1489.6 327.8 L1496.5 331.8M1492.8 322.8 L1496.8 325.7M1496.5 318.2 L1500.2 321.5M1500.7 314.0 L1504.0 317.7M1505.3 310.3 L1508.2 314.3M1510.2 307.1 L1514.2 314.0M1515.5 304.4 L1517.6 309.0M1521.0 302.3 L1522.6 307.0M1526.8 300.7 L1527.8 305.6M1532.6 299.8 L1533.1 304.8" stroke="#555" stroke-width="1"/><path d="M1537.9 305.0 L1539.1 305.0 L1540.5 356.0 L1536.5 356.0 Z" fill="#111"/><circle cx="1538.5" cy="356.0" r="4.5" fill="#111"/></svg>
<div class="inp" style="left:1488px;top:443px;width:100px;height:22px"></div>
<div class="t" style="left:1493px;top:447px;font-size:13px">12:00:00</div>
<div class="a" style="left:1575px;top:447px;width:0;height:0;border-left:4px solid transparent;border-right:4px solid transparent;border-bottom:4px solid #1e1e1e"></div>
<div class="a" style="left:1575px;top:456px;width:0;height:0;border-left:4px solid transparent;border-right:4px solid transparent;border-top:4px solid #1e1e1e"></div>
<div class="a" style="left:1429px;top:489px;width:218px;height:178px;border:1px solid #d0d0dc"></div>
<div class="a" style="left:1437px;top:482px;width:54px;height:16px;background:#ededf2"></div>
<div class="t" style="left:1440px;top:482px">阴影动画</div>
<div class="t" style="left:1445px;top:519px">开始时间</div>
<div class="inp" style="left:1498px;top:515px;width:139px;height:21px"></div>
<div class="t" style="left:1503px;top:518px;font-size:13px">09:00:00</div>
<div class="t" style="left:1445px;top:552px">结束时间</div>
<div class="inp" style="left:1498px;top:548px;width:139px;height:21px"></div>
<div class="t" style="left:1503px;top:551px;font-size:13px">15:00:00</div>
<div class="t" style="left:1445px;top:577px">显示时长</div>
<div class="inp" style="left:1498px;top:573px;width:139px;height:21px"></div>
<div class="t" style="left:1503px;top:576px;font-size:13px">30</div>
<div class="btn" style="left:1445px;top:602px;width:47px;height:19px"></div><div class="t" style="left:1457px;top:604px">开始</div>
<div class="btn" style="left:1585px;top:602px;width:46px;height:19px;border-color:#dcdce4"></div><div class="t" style="left:1596px;top:604px;color:#a0a0a8">结束</div>
</body></html>
